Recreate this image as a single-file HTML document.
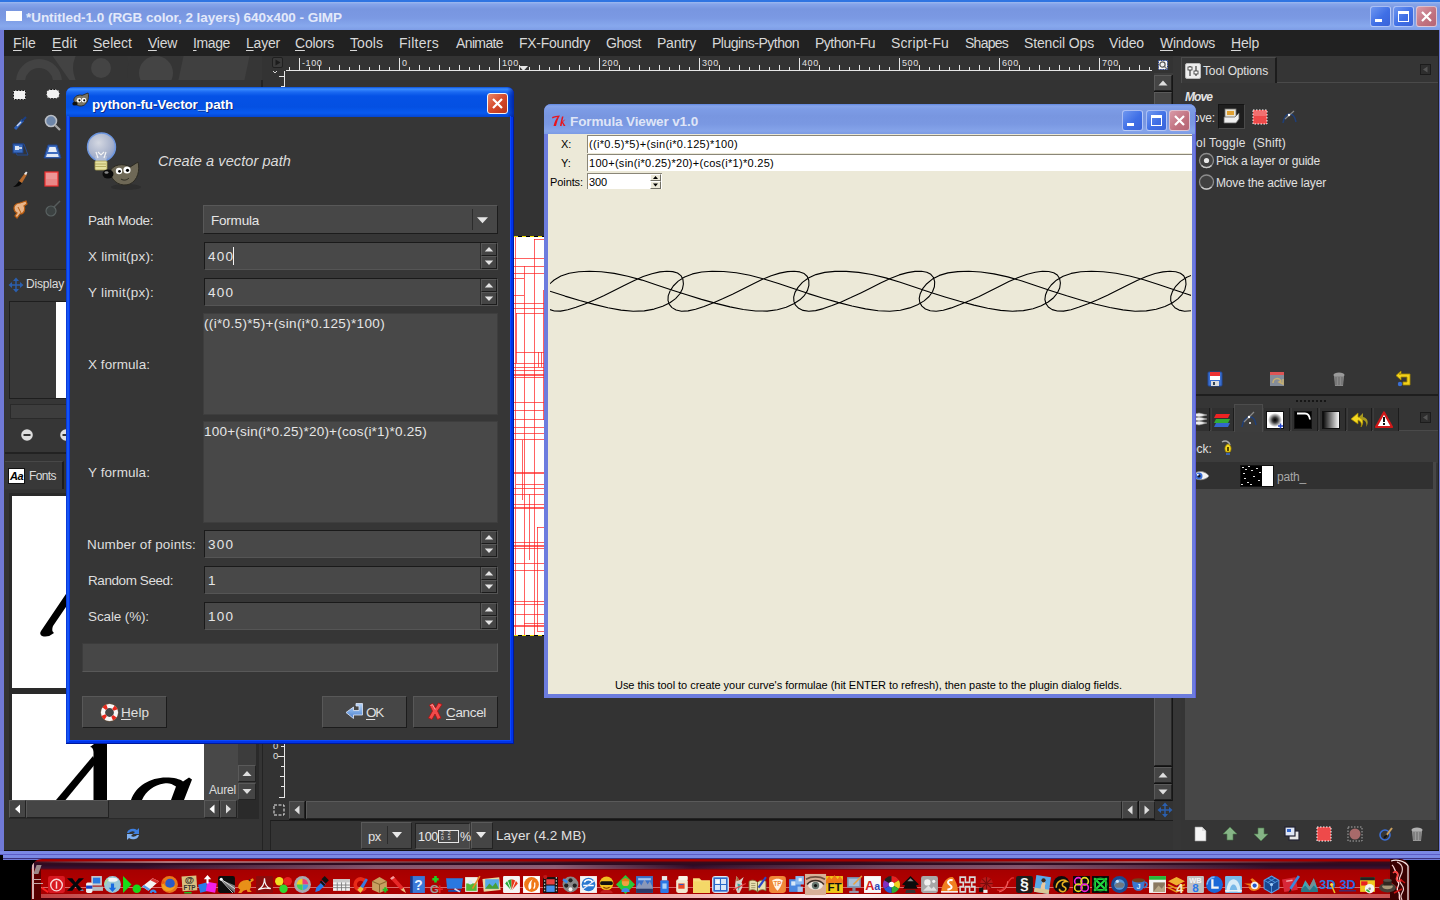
<!DOCTYPE html>
<html><head><meta charset="utf-8"><title>GIMP</title>
<style>
html,body{margin:0;padding:0;}
body{width:1440px;height:900px;overflow:hidden;background:#000;position:relative;font-family:"Liberation Sans",sans-serif;}
div{position:absolute;box-sizing:border-box;}
svg{position:absolute;overflow:visible;}
.t{white-space:nowrap;}
u{text-decoration:underline;text-underline-offset:2px;}
</style></head><body>

<div style="left:0px;top:0px;width:1440px;height:860px;background:#7079d6;"></div>
<div style="left:0px;top:0px;width:1440px;height:30px;background:linear-gradient(#2f74e2 0,#2f74e2 1.500px,#9dbaf0 2px,#86a4ea 4px,#7896e0 9px,#7b99e3 18px,#87a8ed 26px,#7e9de6 30px);"></div>
<div style="left:6px;top:11px;width:16px;height:10px;background:#fff;"></div>
<div class="t" style="left:26px;top:9px;height:17px;line-height:17px;font-size:13.5px;color:#e3e9fa;letter-spacing:-0.042px;font-weight:bold;">*Untitled-1.0 (RGB color, 2 layers) 640x400 - GIMP</div>
<div style="left:1370px;top:6px;width:21px;height:21px;background:linear-gradient(135deg,#6f97f0,#3f6fe6 55%,#3a63d8);border:1px solid rgba(235,240,255,.62);border-radius:3px;"></div>
<div style="left:1375px;top:19px;width:7px;height:3px;background:#fff;"></div>
<div style="left:1393px;top:6px;width:21px;height:21px;background:linear-gradient(135deg,#6f97f0,#3f6fe6 55%,#3a63d8);border:1px solid rgba(235,240,255,.62);border-radius:3px;"></div>
<div style="left:1398px;top:11px;width:11px;height:11px;border:1px solid #fff;border-top:3px solid #fff;"></div>
<div style="left:1416px;top:6px;width:21px;height:21px;background:linear-gradient(135deg,#d99aa8,#c0717f 60%,#b56575);border:1px solid rgba(235,240,255,.62);border-radius:3px;"></div>
<svg style="left:1416px;top:6px" width="21" height="21"><path d="M6 6L15 15M15 6L6 15" stroke="#fff" stroke-width="2.2" fill="none"/></svg>
<div style="left:4px;top:30px;width:1435px;height:26px;background:#212121;"></div>
<div class="t" style="left:13px;top:35px;height:17px;line-height:17px;font-size:14px;color:#d8d8d8;letter-spacing:0.109px;"><u>F</u>ile</div>
<div class="t" style="left:52px;top:35px;height:17px;line-height:17px;font-size:14px;color:#d8d8d8;letter-spacing:0.218px;"><u>E</u>dit</div>
<div class="t" style="left:93px;top:35px;height:17px;line-height:17px;font-size:14px;color:#d8d8d8;letter-spacing:0.014px;"><u>S</u>elect</div>
<div class="t" style="left:148px;top:35px;height:17px;line-height:17px;font-size:14px;color:#d8d8d8;letter-spacing:-0.274px;"><u>V</u>iew</div>
<div class="t" style="left:193px;top:35px;height:17px;line-height:17px;font-size:14px;color:#d8d8d8;letter-spacing:-0.383px;"><u>I</u>mage</div>
<div class="t" style="left:246px;top:35px;height:17px;line-height:17px;font-size:14px;color:#d8d8d8;letter-spacing:-0.205px;"><u>L</u>ayer</div>
<div class="t" style="left:295px;top:35px;height:17px;line-height:17px;font-size:14px;color:#d8d8d8;letter-spacing:-0.243px;"><u>C</u>olors</div>
<div class="t" style="left:350px;top:35px;height:17px;line-height:17px;font-size:14px;color:#d8d8d8;letter-spacing:0.062px;"><u>T</u>ools</div>
<div class="t" style="left:399px;top:35px;height:17px;line-height:17px;font-size:14px;color:#d8d8d8;letter-spacing:0.269px;">Filte<u>r</u>s</div>
<div class="t" style="left:456px;top:35px;height:17px;line-height:17px;font-size:14px;color:#d8d8d8;letter-spacing:-0.623px;">Animate</div>
<div class="t" style="left:519px;top:35px;height:17px;line-height:17px;font-size:14px;color:#d8d8d8;letter-spacing:-0.292px;">FX-Foundry</div>
<div class="t" style="left:606px;top:35px;height:17px;line-height:17px;font-size:14px;color:#d8d8d8;letter-spacing:-0.471px;">Ghost</div>
<div class="t" style="left:657px;top:35px;height:17px;line-height:17px;font-size:14px;color:#d8d8d8;letter-spacing:-0.244px;">Pantry</div>
<div class="t" style="left:712px;top:35px;height:17px;line-height:17px;font-size:14px;color:#d8d8d8;letter-spacing:-0.512px;">Plugins-Python</div>
<div class="t" style="left:815px;top:35px;height:17px;line-height:17px;font-size:14px;color:#d8d8d8;letter-spacing:-0.510px;">Python-Fu</div>
<div class="t" style="left:891px;top:35px;height:17px;line-height:17px;font-size:14px;color:#d8d8d8;letter-spacing:0.134px;">Script-Fu</div>
<div class="t" style="left:965px;top:35px;height:17px;line-height:17px;font-size:14px;color:#d8d8d8;letter-spacing:-0.748px;">Shapes</div>
<div class="t" style="left:1024px;top:35px;height:17px;line-height:17px;font-size:14px;color:#d8d8d8;letter-spacing:-0.145px;">Stencil Ops</div>
<div class="t" style="left:1109px;top:35px;height:17px;line-height:17px;font-size:14px;color:#d8d8d8;letter-spacing:-0.112px;">Video</div>
<div class="t" style="left:1160px;top:35px;height:17px;line-height:17px;font-size:14px;color:#d8d8d8;letter-spacing:-0.257px;"><u>W</u>indows</div>
<div class="t" style="left:1231px;top:35px;height:17px;line-height:17px;font-size:14px;color:#d8d8d8;letter-spacing:-0.199px;"><u>H</u>elp</div>
<div style="left:4px;top:56px;width:1435px;height:794px;background:#333;"></div>
<div style="left:4px;top:56px;width:258px;height:794px;background:#343434;"></div>
<div style="left:261px;top:80px;width:2px;height:770px;background:#232323;"></div>
<div style="left:5px;top:56px;width:257px;height:24px;background:#363636;overflow:hidden;"><div style="left:11px;top:3px;width:46px;height:46px;border-radius:50%;border:9px solid #434343;"></div><div style="left:56px;top:-8px;width:30px;height:40px;background:#434343;transform:skewX(35deg);"></div><div style="left:68px;top:-16px;width:56px;height:56px;border-radius:50%;background:#353535;"></div><div style="left:86px;top:2px;width:20px;height:20px;border-radius:50%;background:#444;"></div><div style="left:122px;top:-12px;width:58px;height:58px;border-radius:50%;background:#353535;"></div><div style="left:134px;top:0px;width:34px;height:34px;border-radius:50%;background:#444;"></div><div style="left:176px;top:0;width:66px;height:24px;background:#404040;transform:skewX(-12deg);"></div></div>
<svg style="left:12px;top:88px" width="16" height="14" viewBox="0 0 16 14"><rect x="1.5" y="2.5" width="12" height="9" fill="#f2f2f2" stroke="#111" stroke-dasharray="1.5 1.5"/></svg>
<svg style="left:44px;top:87px" width="18" height="14" viewBox="0 0 18 14"><rect x="2.5" y="2.5" width="13" height="9" rx="4" fill="#f2f2f2" stroke="#111" stroke-dasharray="1.5 1.5"/></svg>
<svg style="left:12px;top:114px" width="18" height="18" viewBox="0 0 18 18"><path d="M3 15L11 6" stroke="#2c5fb8" stroke-width="3"/><path d="M10 7L14 3" stroke="#1b3f86" stroke-width="2"/><path d="M5 12L9 8" stroke="#cfd8ea" stroke-width="1.5"/></svg>
<svg style="left:43px;top:113px" width="20" height="20" viewBox="0 0 20 20"><circle cx="8" cy="8" r="5.5" fill="#6e86a8" stroke="#b9bdc4" stroke-width="1.6"/><path d="M12 12L17 17" stroke="#a9a9a9" stroke-width="2.2"/></svg>
<svg style="left:11px;top:142px" width="20" height="18" viewBox="0 0 20 18"><path d="M2 2h11l4 11H6z" fill="none" stroke="#234a92" stroke-width="1"/><rect x="2" y="2" width="10" height="9" fill="#3a6cc0" stroke="#1d3f85"/><rect x="4" y="4" width="4" height="4" fill="#dfe7f5"/><path d="M8 6h3" stroke="#fff" stroke-width="1.4"/></svg>
<svg style="left:43px;top:142px" width="20" height="18" viewBox="0 0 20 18"><path d="M5 3h9l4 13H1z" fill="#3d6cc0" stroke="#1f438c"/><path d="M6.5 5h6l1.5 5H5z" fill="#e8eef8"/><path d="M4 12h11l.8 3H3z" fill="#dfe7f5"/></svg>
<svg style="left:11px;top:170px" width="20" height="20" viewBox="0 0 20 20"><path d="M2 17c2-1 4-3 6-6l3 2c-2 3-5 4-9 4z" fill="#0a0a0a"/><path d="M8 11l6-8 2 1.5-5 8.500z" fill="#b86a2c"/><path d="M13 4l2-2.500 1.500 1L15 5z" fill="#e8e8e8"/></svg>
<svg style="left:44px;top:171px" width="16" height="16" viewBox="0 0 16 16"><rect x="1" y="1" width="13" height="14" fill="#e98888" stroke="#f03030" stroke-width="1.2"/><rect x="2" y="2" width="11" height="6" fill="#f0a0a0" opacity=".6"/></svg>
<svg style="left:10px;top:198px" width="22" height="22" viewBox="0 0 22 22"><path d="M4 10c0-3 3-5 6-5l6-2 1 3-3 2c2 3 0 8-4 8l-3 4-2-2 2-3c-2-1-3-3-3-5z" fill="#e8b58a" stroke="#b85c10" stroke-width="1.2"/><path d="M8 9l3 6" stroke="#b85c10" stroke-width="1"/></svg>
<svg style="left:43px;top:198px" width="20" height="22" viewBox="0 0 20 22"><circle cx="8" cy="13" r="5" fill="#3c4242" stroke="#5a6262" stroke-width="1.2"/><path d="M11 9L17 3" stroke="#565c5c" stroke-width="1.5"/></svg>
<div style="left:5px;top:269px;width:257px;height:1px;background:#242424;"></div>
<div style="left:5px;top:270px;width:257px;height:182px;background:#363636;"></div>
<svg style="left:8px;top:277px" width="16" height="16" viewBox="0 0 16 16"><path d="M8 0.500l3 3.500h-6zM8 15.500l3-3.500h-6zM0.500 8l3.500-3v6zM15.500 8l-3.500-3v6z" fill="#2b5fae"/><path d="M8 3v10M3 8h10" stroke="#2b5fae" stroke-width="1.400"/></svg>
<div class="t" style="left:26px;top:276px;height:17px;line-height:17px;font-size:12px;color:#dcdcdc;letter-spacing:-0.192px;">Display</div>
<div style="left:9px;top:301px;width:60px;height:98px;background:#383838;border:1px solid #1e1e1e;"></div>
<div style="left:56px;top:302px;width:12px;height:96px;background:#fff;"></div>
<div style="left:10px;top:404px;width:60px;height:15px;background:#3d3d3d;border:1px solid #2a2a2a;"></div>
<svg style="left:20px;top:428px" width="14" height="14" viewBox="0 0 14 14"><circle cx="7" cy="7" r="5.800" fill="#dedede"/><rect x="3.500" y="6" width="7" height="2" fill="#333"/></svg>
<svg style="left:59px;top:428px" width="14" height="14" viewBox="0 0 14 14"><circle cx="7" cy="7" r="5.800" fill="#dedede"/><rect x="3.500" y="6" width="7" height="2" fill="#333"/></svg>
<div style="left:5px;top:452px;width:257px;height:2px;background:#222;"></div>
<div style="left:5px;top:454px;width:257px;height:396px;background:#343434;"></div>
<div style="left:5px;top:461px;width:59px;height:28px;background:#383838;border-right:2px solid #1c1c1c;border-top:1px solid #484848;"></div>
<div style="left:8px;top:468px;width:17px;height:16px;background:#fff;border:1px solid #111;"><div class="t" style="left:1px;top:0;font:italic bold 11px/14px 'Liberation Sans',sans-serif;color:#000;letter-spacing:-0.5px">Aa</div></div>
<div class="t" style="left:29px;top:468px;height:17px;line-height:17px;font-size:12px;color:#dcdcdc;letter-spacing:-0.602px;">Fonts</div>
<div style="left:9px;top:493px;width:250px;height:326px;background:#2a2a2a;"></div>
<div style="left:12px;top:496px;width:192px;height:192px;background:#fff;"></div>
<div style="left:12px;top:694px;width:192px;height:106px;background:#fff;"></div>
<svg style="left:0;top:0" width="1440" height="900"><path d="M70 588L70 601L53 626Q51 631 54 633Q48 638 42 636Q39 634 41 631Z" fill="#000"/><path d="M94 744L107 744L107 800L93.5 800L93.5 752Q93 747 90 747Z" fill="#000"/><path d="M93 756L96 763L65.500 800L56 800Z" fill="#000"/><path d="M131 800C136 786 150 777.500 166 777.500C174 777.500 180 779 183 781.500L189 777.500L192 779.500L184 800L171 800L176 786.500C172 783.500 168 782.500 164 783.500C154 785 146 791 142 800Z" fill="#000"/></svg>
<div style="left:204px;top:496px;width:34px;height:192px;background:#484848;"></div>
<div style="left:204px;top:694px;width:34px;height:106px;background:#484848;"></div>
<div class="t" style="left:209px;top:782px;height:16px;line-height:16px;font-size:12px;color:#dcdcdc;letter-spacing:-0.203px;">Aurel</div>
<div style="left:238px;top:496px;width:18px;height:304px;background:#3c3c3c;"></div>
<div style="left:238px;top:765px;width:18px;height:17px;background:#454545;border:1px solid #5a5a5a;border-right-color:#222;border-bottom-color:#222;"></div>
<svg style="left:0;top:0" width="1440" height="900"><polygon points="242.5,776.0 251.5,776.0 247.0,771.0" fill="#dedede"/></svg>
<div style="left:238px;top:783px;width:18px;height:17px;background:#454545;border:1px solid #5a5a5a;border-right-color:#222;border-bottom-color:#222;"></div>
<svg style="left:0;top:0" width="1440" height="900"><polygon points="242.5,789.0 251.5,789.0 247.0,794.0" fill="#dedede"/></svg>
<div style="left:9px;top:800px;width:229px;height:18px;background:#3c3c3c;"></div>
<div style="left:9px;top:800px;width:17px;height:18px;background:#454545;border:1px solid #5a5a5a;border-right-color:#222;border-bottom-color:#222;"></div>
<svg style="left:0;top:0" width="1440" height="900"><polygon points="20.0,804.5 20.0,813.5 15.0,809.0" fill="#fff"/></svg>
<div style="left:26px;top:800px;width:83px;height:18px;background:#454545;border:1px solid #585858;border-right-color:#222;border-bottom-color:#222;"></div>
<div style="left:204px;top:800px;width:16px;height:18px;background:#454545;border:1px solid #5a5a5a;border-right-color:#222;border-bottom-color:#222;"></div>
<svg style="left:0;top:0" width="1440" height="900"><polygon points="214.5,804.5 214.5,813.5 209.5,809.0" fill="#fff"/></svg>
<div style="left:220px;top:800px;width:17px;height:18px;background:#454545;border:1px solid #5a5a5a;border-right-color:#222;border-bottom-color:#222;"></div>
<svg style="left:0;top:0" width="1440" height="900"><polygon points="226.0,804.5 226.0,813.5 231.0,809.0" fill="#dedede"/></svg>
<svg style="left:124px;top:825px" width="18" height="18" viewBox="0 0 18 18"><path d="M3 8a6 5 0 0 1 10-3l2-2v6h-6l2-2a4 3 0 0 0-6 1z" fill="#3d7fe0"/><path d="M15 10a6 5 0 0 1-10 3l-2 2v-6h6l-2 2a4 3 0 0 0 6-1z" fill="#7fb0f0"/></svg>
<div style="left:270px;top:56px;width:903px;height:765px;background:#333;"></div>
<div style="left:272px;top:57px;width:11px;height:11px;background:#3b3b3b;border:1px solid #202020;border-radius:2px;"></div>
<svg style="left:272px;top:57px" width="11" height="11" viewBox="0 0 11 11"><polygon points="3.500,2.500 3.500,8.500 8.500,5.500" fill="#1c1c1c"/></svg>
<svg style="left:270px;top:68px" width="12" height="8" viewBox="0 0 12 8"><path d="M3 3l2 2 2-2" fill="none" stroke="#d8d8d8" stroke-width="1"/></svg>
<svg style="left:0;top:0" width="1440" height="900"><rect x="289" y="67" width="1" height="4" fill="#e6e6e6"/><rect x="299" y="58" width="1" height="13" fill="#e6e6e6"/><rect x="309" y="67" width="1" height="4" fill="#e6e6e6"/><rect x="319" y="65" width="1" height="6" fill="#e6e6e6"/><rect x="329" y="67" width="1" height="4" fill="#e6e6e6"/><rect x="339" y="65" width="1" height="6" fill="#e6e6e6"/><rect x="349" y="67" width="1" height="4" fill="#e6e6e6"/><rect x="359" y="65" width="1" height="6" fill="#e6e6e6"/><rect x="369" y="67" width="1" height="4" fill="#e6e6e6"/><rect x="379" y="65" width="1" height="6" fill="#e6e6e6"/><rect x="389" y="67" width="1" height="4" fill="#e6e6e6"/><rect x="399" y="58" width="1" height="13" fill="#e6e6e6"/><rect x="409" y="67" width="1" height="4" fill="#e6e6e6"/><rect x="419" y="65" width="1" height="6" fill="#e6e6e6"/><rect x="429" y="67" width="1" height="4" fill="#e6e6e6"/><rect x="439" y="65" width="1" height="6" fill="#e6e6e6"/><rect x="449" y="67" width="1" height="4" fill="#e6e6e6"/><rect x="459" y="65" width="1" height="6" fill="#e6e6e6"/><rect x="469" y="67" width="1" height="4" fill="#e6e6e6"/><rect x="479" y="65" width="1" height="6" fill="#e6e6e6"/><rect x="489" y="67" width="1" height="4" fill="#e6e6e6"/><rect x="499" y="58" width="1" height="13" fill="#e6e6e6"/><rect x="509" y="67" width="1" height="4" fill="#e6e6e6"/><rect x="519" y="65" width="1" height="6" fill="#e6e6e6"/><rect x="529" y="67" width="1" height="4" fill="#e6e6e6"/><rect x="539" y="65" width="1" height="6" fill="#e6e6e6"/><rect x="549" y="67" width="1" height="4" fill="#e6e6e6"/><rect x="559" y="65" width="1" height="6" fill="#e6e6e6"/><rect x="569" y="67" width="1" height="4" fill="#e6e6e6"/><rect x="579" y="65" width="1" height="6" fill="#e6e6e6"/><rect x="589" y="67" width="1" height="4" fill="#e6e6e6"/><rect x="599" y="58" width="1" height="13" fill="#e6e6e6"/><rect x="609" y="67" width="1" height="4" fill="#e6e6e6"/><rect x="619" y="65" width="1" height="6" fill="#e6e6e6"/><rect x="629" y="67" width="1" height="4" fill="#e6e6e6"/><rect x="639" y="65" width="1" height="6" fill="#e6e6e6"/><rect x="649" y="67" width="1" height="4" fill="#e6e6e6"/><rect x="659" y="65" width="1" height="6" fill="#e6e6e6"/><rect x="669" y="67" width="1" height="4" fill="#e6e6e6"/><rect x="679" y="65" width="1" height="6" fill="#e6e6e6"/><rect x="689" y="67" width="1" height="4" fill="#e6e6e6"/><rect x="699" y="58" width="1" height="13" fill="#e6e6e6"/><rect x="709" y="67" width="1" height="4" fill="#e6e6e6"/><rect x="719" y="65" width="1" height="6" fill="#e6e6e6"/><rect x="729" y="67" width="1" height="4" fill="#e6e6e6"/><rect x="739" y="65" width="1" height="6" fill="#e6e6e6"/><rect x="749" y="67" width="1" height="4" fill="#e6e6e6"/><rect x="759" y="65" width="1" height="6" fill="#e6e6e6"/><rect x="769" y="67" width="1" height="4" fill="#e6e6e6"/><rect x="779" y="65" width="1" height="6" fill="#e6e6e6"/><rect x="789" y="67" width="1" height="4" fill="#e6e6e6"/><rect x="799" y="58" width="1" height="13" fill="#e6e6e6"/><rect x="809" y="67" width="1" height="4" fill="#e6e6e6"/><rect x="819" y="65" width="1" height="6" fill="#e6e6e6"/><rect x="829" y="67" width="1" height="4" fill="#e6e6e6"/><rect x="839" y="65" width="1" height="6" fill="#e6e6e6"/><rect x="849" y="67" width="1" height="4" fill="#e6e6e6"/><rect x="859" y="65" width="1" height="6" fill="#e6e6e6"/><rect x="869" y="67" width="1" height="4" fill="#e6e6e6"/><rect x="879" y="65" width="1" height="6" fill="#e6e6e6"/><rect x="889" y="67" width="1" height="4" fill="#e6e6e6"/><rect x="899" y="58" width="1" height="13" fill="#e6e6e6"/><rect x="909" y="67" width="1" height="4" fill="#e6e6e6"/><rect x="919" y="65" width="1" height="6" fill="#e6e6e6"/><rect x="929" y="67" width="1" height="4" fill="#e6e6e6"/><rect x="939" y="65" width="1" height="6" fill="#e6e6e6"/><rect x="949" y="67" width="1" height="4" fill="#e6e6e6"/><rect x="959" y="65" width="1" height="6" fill="#e6e6e6"/><rect x="969" y="67" width="1" height="4" fill="#e6e6e6"/><rect x="979" y="65" width="1" height="6" fill="#e6e6e6"/><rect x="989" y="67" width="1" height="4" fill="#e6e6e6"/><rect x="999" y="58" width="1" height="13" fill="#e6e6e6"/><rect x="1009" y="67" width="1" height="4" fill="#e6e6e6"/><rect x="1019" y="65" width="1" height="6" fill="#e6e6e6"/><rect x="1029" y="67" width="1" height="4" fill="#e6e6e6"/><rect x="1039" y="65" width="1" height="6" fill="#e6e6e6"/><rect x="1049" y="67" width="1" height="4" fill="#e6e6e6"/><rect x="1059" y="65" width="1" height="6" fill="#e6e6e6"/><rect x="1069" y="67" width="1" height="4" fill="#e6e6e6"/><rect x="1079" y="65" width="1" height="6" fill="#e6e6e6"/><rect x="1089" y="67" width="1" height="4" fill="#e6e6e6"/><rect x="1099" y="58" width="1" height="13" fill="#e6e6e6"/><rect x="1109" y="67" width="1" height="4" fill="#e6e6e6"/><rect x="1119" y="65" width="1" height="6" fill="#e6e6e6"/><rect x="1129" y="67" width="1" height="4" fill="#e6e6e6"/><rect x="1139" y="65" width="1" height="6" fill="#e6e6e6"/><rect x="1149" y="67" width="1" height="4" fill="#e6e6e6"/><rect x="286" y="70" width="866" height="1" fill="#e6e6e6"/><rect x="284" y="71" width="1" height="16" fill="#e6e6e6"/><rect x="279" y="76" width="6" height="1" fill="#e6e6e6"/><rect x="281" y="86" width="4" height="1" fill="#e6e6e6"/><rect x="284" y="744" width="1" height="54" fill="#e6e6e6"/><rect x="281" y="746" width="4" height="1" fill="#e6e6e6"/><rect x="278" y="756" width="7" height="1" fill="#e6e6e6"/><rect x="281" y="766" width="4" height="1" fill="#e6e6e6"/><rect x="280" y="776" width="5" height="1" fill="#e6e6e6"/><rect x="281" y="786" width="4" height="1" fill="#e6e6e6"/><rect x="279" y="797" width="6" height="1" fill="#e6e6e6"/><polygon points="519,66 528,66 523.5,71" fill="#e6e6e6"/></svg>
<div class="t" style="left:302px;top:58px;height:11px;line-height:11px;font-size:9px;color:#e0e0e0;letter-spacing:0.6px;">-100</div>
<div class="t" style="left:402px;top:58px;height:11px;line-height:11px;font-size:9px;color:#e0e0e0;letter-spacing:0.6px;">0</div>
<div class="t" style="left:502px;top:58px;height:11px;line-height:11px;font-size:9px;color:#e0e0e0;letter-spacing:0.6px;">100</div>
<div class="t" style="left:602px;top:58px;height:11px;line-height:11px;font-size:9px;color:#e0e0e0;letter-spacing:0.6px;">200</div>
<div class="t" style="left:702px;top:58px;height:11px;line-height:11px;font-size:9px;color:#e0e0e0;letter-spacing:0.6px;">300</div>
<div class="t" style="left:802px;top:58px;height:11px;line-height:11px;font-size:9px;color:#e0e0e0;letter-spacing:0.6px;">400</div>
<div class="t" style="left:902px;top:58px;height:11px;line-height:11px;font-size:9px;color:#e0e0e0;letter-spacing:0.6px;">500</div>
<div class="t" style="left:1002px;top:58px;height:11px;line-height:11px;font-size:9px;color:#e0e0e0;letter-spacing:0.6px;">600</div>
<div class="t" style="left:1102px;top:58px;height:11px;line-height:11px;font-size:9px;color:#e0e0e0;letter-spacing:0.6px;">700</div>
<div class="t" style="left:273px;top:741px;height:10px;line-height:10px;font-size:9.5px;color:#e0e0e0;">0</div>
<div class="t" style="left:273px;top:751px;height:10px;line-height:10px;font-size:9.5px;color:#e0e0e0;">0</div>
<svg style="left:1158px;top:60px" width="10" height="10" viewBox="0 0 10 10"><rect x="0.500" y="0.500" width="9" height="9" fill="#f8f8f8" stroke="#1a3a9a" stroke-dasharray="1.200 1.200"/><circle cx="4.500" cy="4.500" r="2.600" fill="#f0f0f0" stroke="#555" stroke-width="1.200"/><path d="M6.500 6.500l2.500 2.500" stroke="#777" stroke-width="1.300"/></svg>
<div style="left:1154px;top:73px;width:19px;height:728px;background:#3c3c3c;"></div>
<div style="left:1172px;top:75px;width:1px;height:726px;background:#161616;"></div>
<div style="left:1154px;top:75px;width:18px;height:16px;background:#454545;border:1px solid #5a5a5a;border-right-color:#222;border-bottom-color:#222;"></div>
<svg style="left:0;top:0" width="1440" height="900"><polygon points="1158.5,85.5 1167.5,85.5 1163.0,80.5" fill="#dedede"/></svg>
<div style="left:1154px;top:91px;width:18px;height:1px;background:#111;"></div>
<div style="left:1154px;top:92px;width:18px;height:674px;background:#464646;border:1px solid #5a5a5a;border-right-color:#2a2a2a;border-bottom-color:#1c1c1c;"></div>
<div style="left:1154px;top:766px;width:18px;height:1px;background:#111;"></div>
<div style="left:1154px;top:767px;width:18px;height:16px;background:#454545;border:1px solid #5a5a5a;border-right-color:#222;border-bottom-color:#222;"></div>
<svg style="left:0;top:0" width="1440" height="900"><polygon points="1158.5,777.5 1167.5,777.5 1163.0,772.5" fill="#dedede"/></svg>
<div style="left:1154px;top:783px;width:18px;height:1px;background:#111;"></div>
<div style="left:1154px;top:784px;width:18px;height:16px;background:#454545;border:1px solid #5a5a5a;border-right-color:#222;border-bottom-color:#222;"></div>
<svg style="left:0;top:0" width="1440" height="900"><polygon points="1158.5,789.5 1167.5,789.5 1163.0,794.5" fill="#dedede"/></svg>
<div style="left:1154px;top:800px;width:18px;height:1px;background:#111;"></div>
<div style="left:289px;top:801px;width:866px;height:19px;background:#3c3c3c;"></div>
<div style="left:289px;top:819px;width:866px;height:1px;background:#161616;"></div>
<div style="left:289px;top:801px;width:16px;height:18px;background:#454545;border:1px solid #5a5a5a;border-right-color:#222;border-bottom-color:#222;"></div>
<svg style="left:0;top:0" width="1440" height="900"><polygon points="299.5,805.5 299.5,814.5 294.5,810.0" fill="#dedede"/></svg>
<div style="left:305px;top:801px;width:1px;height:18px;background:#111;"></div>
<div style="left:306px;top:801px;width:816px;height:18px;background:#464646;border:1px solid #5a5a5a;border-right-color:#222;border-bottom-color:#222;"></div>
<div style="left:1122px;top:801px;width:16px;height:18px;background:#454545;border:1px solid #5a5a5a;border-right-color:#222;border-bottom-color:#222;"></div>
<svg style="left:0;top:0" width="1440" height="900"><polygon points="1132.5,805.5 1132.5,814.5 1127.5,810.0" fill="#dedede"/></svg>
<div style="left:1138px;top:801px;width:1px;height:18px;background:#111;"></div>
<div style="left:1139px;top:801px;width:16px;height:18px;background:#454545;border:1px solid #5a5a5a;border-right-color:#222;border-bottom-color:#222;"></div>
<svg style="left:0;top:0" width="1440" height="900"><polygon points="1144.5,805.5 1144.5,814.5 1149.5,810.0" fill="#dedede"/></svg>
<svg style="left:273px;top:804px" width="12" height="12" viewBox="0 0 12 12"><rect x="1" y="1" width="10" height="10" fill="none" stroke="#eee" stroke-width="1" stroke-dasharray="3 1.500"/></svg>
<svg style="left:1157px;top:802px" width="16" height="16" viewBox="0 0 16 16"><path d="M8 0.500l3 3.500h-6zM8 15.500l3-3.500h-6zM0.500 8l3.500-3v6zM15.500 8l-3.500-3v6z" fill="#2b5fae"/><path d="M8 3v10M3 8h10" stroke="#2b5fae" stroke-width="1.400"/></svg>
<div style="left:270px;top:820px;width:903px;height:30px;background:#343434;border-top:1px solid #1c1c1c;border-left:1px solid #222;"></div>
<div style="left:361px;top:822px;width:51px;height:27px;background:#454545;border:1px solid #5a5a5a;border-right-color:#222;border-bottom-color:#222;"></div>
<div class="t" style="left:368px;top:828px;height:17px;line-height:17px;font-size:13px;color:#e0e0e0;letter-spacing:-0.365px;">px</div>
<div style="left:387px;top:826px;width:1px;height:18px;background:#2c2c2c;"></div>
<div style="left:415px;top:823px;width:55px;height:26px;background:#484848;border:1px solid #222;border-right-color:#5a5a5a;border-bottom-color:#5a5a5a;"></div>
<div class="t" style="left:418px;top:829px;height:16px;line-height:16px;font-size:12.5px;color:#e8e8e8;letter-spacing:-0.285px;">100</div>
<div style="left:438px;top:830px;width:21px;height:13px;border:1px solid #e8e8e8;"><div class="t" style="left:2px;top:0;font-size:5px;line-height:5px;color:#e8e8e8;letter-spacing:4px">22<br>05</div></div>
<div class="t" style="left:460px;top:829px;height:16px;line-height:16px;font-size:12.5px;color:#e8e8e8;letter-spacing:-3.115px;">%</div>
<div style="left:471px;top:822px;width:22px;height:27px;background:#454545;border:1px solid #5a5a5a;border-right-color:#222;border-bottom-color:#222;"></div>
<svg style="left:0;top:0" width="1440" height="900"><polygon points="392,832 402,832 397,838" fill="#e8e8e8"/><polygon points="476,832 486,832 481,838" fill="#e8e8e8"/></svg>
<div class="t" style="left:496px;top:827px;height:18px;line-height:18px;font-size:13.5px;color:#e0e0e0;letter-spacing:0.052px;">Layer (4.2 MB)</div>
<svg style="left:0;top:0" width="1440" height="900"><rect x="514" y="236" width="31" height="400" fill="#fff"/><rect x="534" y="239" width="11" height="1" fill="#ff2020" opacity=".7"/><rect x="514" y="258" width="31" height="1" fill="#ff2020" opacity=".7"/><rect x="514" y="266" width="31" height="1" fill="#ff2020" opacity=".7"/><rect x="514" y="273" width="31" height="1" fill="#ff2020" opacity=".7"/><rect x="514" y="278" width="10" height="1" fill="#ff2020" opacity=".7"/><rect x="514" y="295" width="10" height="1" fill="#ff2020" opacity=".7"/><rect x="514" y="303" width="31" height="1" fill="#ff2020" opacity=".7"/><rect x="514" y="308" width="31" height="1" fill="#ff2020" opacity=".7"/><rect x="516" y="313" width="29" height="1" fill="#ff2020" opacity=".7"/><rect x="516" y="352" width="29" height="1" fill="#ff2020" opacity=".7"/><rect x="514" y="363" width="31" height="1" fill="#ff2020" opacity=".7"/><rect x="514" y="367" width="31" height="1" fill="#ff2020" opacity=".7"/><rect x="514" y="370" width="31" height="1" fill="#ff2020" opacity=".7"/><rect x="514" y="374" width="31" height="2" fill="#ff2020" opacity=".7"/><rect x="514" y="377" width="31" height="1" fill="#ff2020" opacity=".7"/><rect x="514" y="402" width="31" height="1" fill="#ff2020" opacity=".7"/><rect x="514" y="410" width="31" height="1" fill="#ff2020" opacity=".7"/><rect x="514" y="419" width="31" height="1" fill="#ff2020" opacity=".7"/><rect x="514" y="427" width="31" height="1" fill="#ff2020" opacity=".7"/><rect x="514" y="433" width="31" height="1" fill="#ff2020" opacity=".7"/><rect x="514" y="439" width="31" height="1" fill="#ff2020" opacity=".7"/><rect x="514" y="472" width="31" height="2" fill="#ff2020" opacity=".7"/><rect x="516" y="484" width="29" height="1" fill="#ff2020" opacity=".7"/><rect x="514" y="488" width="31" height="1" fill="#ff2020" opacity=".7"/><rect x="514" y="494" width="31" height="1" fill="#ff2020" opacity=".7"/><rect x="514" y="504" width="31" height="1" fill="#ff2020" opacity=".7"/><rect x="514" y="507" width="31" height="2" fill="#ff2020" opacity=".7"/><rect x="537" y="527" width="8" height="1" fill="#ff2020" opacity=".7"/><rect x="514" y="542" width="31" height="1" fill="#ff2020" opacity=".7"/><rect x="514" y="545" width="31" height="2" fill="#ff2020" opacity=".7"/><rect x="514" y="548" width="31" height="1" fill="#ff2020" opacity=".7"/><rect x="514" y="563" width="31" height="1" fill="#ff2020" opacity=".7"/><rect x="514" y="570" width="31" height="1" fill="#ff2020" opacity=".7"/><rect x="514" y="601" width="31" height="1" fill="#ff2020" opacity=".7"/><rect x="514" y="604" width="31" height="1" fill="#ff2020" opacity=".7"/><rect x="514" y="614" width="31" height="1" fill="#ff2020" opacity=".7"/><rect x="524" y="623" width="21" height="1" fill="#ff2020" opacity=".7"/><rect x="514" y="625" width="31" height="2" fill="#ff2020" opacity=".7"/><rect x="537" y="631" width="8" height="1" fill="#ff2020" opacity=".7"/><rect x="515" y="236" width="1" height="400" fill="#ff2020" opacity=".7"/><rect x="524" y="266" width="1" height="370" fill="#ff2020" opacity=".7"/><rect x="534" y="239" width="1" height="397" fill="#ff2020" opacity=".7"/><rect x="543" y="290" width="1" height="130" fill="#ff2020" opacity=".7"/><rect x="516" y="313" width="1" height="50" fill="#ff2020" opacity=".7"/><rect x="538" y="352" width="1" height="15" fill="#ff2020" opacity=".7"/><rect x="541" y="352" width="1" height="15" fill="#ff2020" opacity=".7"/><rect x="537" y="527" width="1" height="104" fill="#ff2020" opacity=".7"/><rect x="529" y="494" width="1" height="66" fill="#ff2020" opacity=".7"/><rect x="522" y="440" width="1" height="60" fill="#ff2020" opacity=".7"/><path d="M514 236.500H545M514 635.500H545" stroke="#000" stroke-width="1"/><path d="M514 236.500H545M514 635.500H545" stroke="#f0e000" stroke-width="1" stroke-dasharray="4 4"/></svg>
<div style="left:1173px;top:56px;width:8px;height:794px;background:#363636;"></div>
<div style="left:1181px;top:56px;width:1px;height:794px;background:#3f3f3f;"></div>
<div style="left:1181px;top:56px;width:257px;height:794px;background:#353535;"></div>
<div style="left:1438px;top:56px;width:1px;height:794px;background:#222;"></div>
<div style="left:1181px;top:431px;width:257px;height:32px;background:#3c3c3c;"></div>
<div style="left:1181px;top:82px;width:257px;height:1px;background:#4a4a4a;"></div>
<div style="left:1181px;top:57px;width:96px;height:26px;background:#383838;border:1px solid #4c4c4c;border-bottom:none;border-right:2px solid #1c1c1c;"></div>
<svg style="left:1185px;top:63px" width="16" height="16" viewBox="0 0 16 16"><rect x="0.500" y="0.500" width="15" height="15" rx="1.500" fill="#efefef" stroke="#bbb"/><path d="M5 3v10M11 3v10" stroke="#444" stroke-width="1.200"/><rect x="3" y="4" width="4" height="3" fill="#fff" stroke="#333" stroke-width=".8"/><rect x="9" y="8" width="4" height="3" fill="#fff" stroke="#333" stroke-width=".8"/></svg>
<div class="t" style="left:1203px;top:63px;height:17px;line-height:17px;font-size:12px;color:#e0e0e0;letter-spacing:-0.142px;">Tool Options</div>
<div style="left:1420px;top:64px;width:11px;height:11px;background:#2e2e2e;border:1px solid #1c1c1c;"></div>
<svg style="left:1420px;top:64px" width="11" height="11" viewBox="0 0 11 11"><polygon points="7.500,2.500 7.500,8.500 3,5.500" fill="#555"/></svg>
<div class="t" style="left:1185px;top:89px;height:16px;line-height:16px;font-size:12px;color:#e4e4e4;letter-spacing:-0.918px;font-weight:bold;font-style:italic;">Move</div>
<div class="t" style="left:1183px;top:110px;height:17px;line-height:17px;font-size:12px;color:#e0e0e0;letter-spacing:-0.136px;">Move:</div>
<div style="left:1218px;top:104px;width:27px;height:25px;background:#1e1e1e;border:1px solid #141414;border-right-color:#4a4a4a;border-bottom-color:#4a4a4a;"></div>
<svg style="left:1223px;top:108px" width="18" height="17" viewBox="0 0 18 17"><rect x="2" y="1" width="11" height="9" fill="#e8e4d8" stroke="#777" stroke-width=".8"/><rect x="4" y="3" width="7" height="4" fill="#e0a030"/><path d="M1 9h11l4-4v6l-3 4H1z" fill="#f0f0f0" stroke="#666" stroke-width=".8"/></svg>
<svg style="left:1252px;top:109px" width="16" height="16" viewBox="0 0 16 16"><rect x="1" y="1" width="14" height="14" fill="#ee4a4a" stroke="#fff" stroke-width="1" stroke-dasharray="1.500 1.500"/><rect x="2" y="2" width="12" height="5" fill="#f58a8a" opacity=".6"/></svg>
<svg style="left:1280px;top:108px" width="18" height="18" viewBox="0 0 18 18"><path d="M3 15c1-6 4-9 7-9s5 3 6 8" fill="none" stroke="#1f3f78" stroke-width="1.500"/><path d="M5 11L14 3" stroke="#8a8a8a" stroke-width="1.200"/><circle cx="9" cy="7" r="1.200" fill="#fff"/></svg>
<div class="t" style="left:1183px;top:135px;height:17px;line-height:17px;font-size:12px;color:#e0e0e0;letter-spacing:0.192px;">Tool Toggle  (Shift)</div>
<svg style="left:0;top:0" width="1440" height="900"><circle cx="1206.5" cy="160.5" r="7" fill="#404040" stroke="#8c8c8c" stroke-width="1.300"/><path d="M1201.5 165.5A7 7 0 0 0 1211.5 165.5" fill="none" stroke="#c8c8c8" stroke-width="1.300"/><circle cx="1206.5" cy="160.5" r="2.600" fill="#e8e8e8"/></svg>
<svg style="left:0;top:0" width="1440" height="900"><circle cx="1206.5" cy="182" r="7" fill="#404040" stroke="#8c8c8c" stroke-width="1.300"/><path d="M1201.5 187A7 7 0 0 0 1211.5 187" fill="none" stroke="#c8c8c8" stroke-width="1.300"/></svg>
<div class="t" style="left:1216px;top:153px;height:17px;line-height:17px;font-size:12px;color:#e0e0e0;letter-spacing:-0.225px;">Pick a layer or guide</div>
<div class="t" style="left:1216px;top:175px;height:17px;line-height:17px;font-size:12px;color:#e0e0e0;letter-spacing:-0.161px;">Move the active layer</div>
<svg style="left:1207px;top:371px" width="16" height="16" viewBox="0 0 16 16"><rect x="1" y="1" width="14" height="14" rx="1" fill="#3a6fd0" stroke="#234a9a"/><rect x="3" y="1" width="10" height="4" fill="#e33"/><rect x="3" y="5" width="10" height="4" fill="#fff"/><rect x="4" y="10" width="8" height="5" fill="#dcdcdc"/><rect x="6" y="11" width="2" height="3" fill="#345"/></svg>
<svg style="left:1269px;top:371px" width="16" height="16" viewBox="0 0 16 16"><rect x="1" y="1" width="14" height="14" fill="#9aa4b4" opacity=".8"/><rect x="1" y="1" width="14" height="3" fill="#d55"/><path d="M4 12c0-5 6-6 8-2l-2 1 4 2 0-5" stroke="#c8b070" stroke-width="1.500" fill="none"/></svg>
<svg style="left:1331px;top:371px" width="16" height="16" viewBox="0 0 16 16"><ellipse cx="8" cy="4" rx="5.500" ry="2.500" fill="#9a9a9a"/><path d="M3 5l1 10h8l1-10z" fill="#8a8a8a"/><path d="M5 6v8M8 6v8M11 6v8" stroke="#666" stroke-width="1"/></svg>
<svg style="left:1395px;top:370px" width="18" height="18" viewBox="0 0 18 18"><path d="M4 4h11v11H8v-3h4V7H6v3L1 5.500 6 1v3z" fill="#f2d21c" stroke="#a88a00" stroke-width=".8"/><circle cx="5" cy="14" r="2.200" fill="#3b6fd6"/></svg>
<div style="left:1181px;top:394px;width:257px;height:2px;background:#1e1e1e;"></div>
<div style="left:1296px;top:400px;width:2px;height:2px;background:#161616;"></div>
<div style="left:1300px;top:400px;width:2px;height:2px;background:#161616;"></div>
<div style="left:1304px;top:400px;width:2px;height:2px;background:#161616;"></div>
<div style="left:1308px;top:400px;width:2px;height:2px;background:#161616;"></div>
<div style="left:1312px;top:400px;width:2px;height:2px;background:#161616;"></div>
<div style="left:1316px;top:400px;width:2px;height:2px;background:#161616;"></div>
<div style="left:1320px;top:400px;width:2px;height:2px;background:#161616;"></div>
<div style="left:1324px;top:400px;width:2px;height:2px;background:#161616;"></div>
<div style="left:1181px;top:430px;width:257px;height:1px;background:#4a4a4a;"></div>
<div style="left:1183px;top:408px;width:27px;height:23px;background:#303030;border-right:1px solid #1c1c1c;border-left:1px solid #3c3c3c;"></div>
<div style="left:1211px;top:408px;width:23px;height:23px;background:#303030;border-right:1px solid #1c1c1c;border-left:1px solid #3c3c3c;"></div>
<div style="left:1234px;top:404px;width:29px;height:28px;background:#3d3d3d;border:1px solid #4c4c4c;border-bottom:none;"></div>
<div style="left:1263px;top:408px;width:27px;height:23px;background:#303030;border-right:1px solid #1c1c1c;border-left:1px solid #3c3c3c;"></div>
<div style="left:1291px;top:408px;width:27px;height:23px;background:#303030;border-right:1px solid #1c1c1c;border-left:1px solid #3c3c3c;"></div>
<div style="left:1319px;top:408px;width:27px;height:23px;background:#303030;border-right:1px solid #1c1c1c;border-left:1px solid #3c3c3c;"></div>
<div style="left:1347px;top:408px;width:25px;height:23px;background:#303030;border-right:1px solid #1c1c1c;border-left:1px solid #3c3c3c;"></div>
<div style="left:1373px;top:408px;width:26px;height:23px;background:#303030;border-right:1px solid #1c1c1c;border-left:1px solid #3c3c3c;"></div>
<svg style="left:1190px;top:411px" width="18" height="18" viewBox="0 0 18 18"><path d="M1 4l8-2 8 2-8 2z M1 8l8-2 8 2-8 2z M1 12l8-2 8 2-8 2z" fill="#eee" stroke="#999" stroke-width=".6"/></svg>
<svg style="left:1213px;top:411px" width="18" height="18" viewBox="0 0 18 18"><path d="M3 3h14l-2 4H1z" fill="#e22"/><path d="M2 8h14l-2 4H0z" fill="#3a3" transform="translate(1 0)"/><path d="M2 12h14l-2 4H0z" fill="#36c" transform="translate(1 0)"/></svg>
<svg style="left:1239px;top:409px" width="20" height="20" viewBox="0 0 20 20"><path d="M3 18c1-7 4-10 8-10s5 3 6 8" fill="none" stroke="#1f3f78" stroke-width="1.500"/><path d="M5 13L15 3" stroke="#8a8a8a" stroke-width="1.200"/><circle cx="10" cy="8" r="1.200" fill="#fff"/><circle cx="11" cy="14" r="1" fill="#fff"/></svg>
<svg style="left:1266px;top:411px" width="18" height="18"><defs><radialGradient id="rg1"><stop offset="0" stop-color="#000"/><stop offset=".35" stop-color="#333"/><stop offset="1" stop-color="#fff"/></radialGradient></defs><rect x="0.500" y="0.500" width="17" height="17" fill="#fff" stroke="#111"/><circle cx="9" cy="9" r="7" fill="url(#rg1)"/><path d="M12 15h5M14.500 12.500v5" stroke="#24c" stroke-width="1.500"/></svg>
<svg style="left:1294px;top:411px" width="18" height="18" viewBox="0 0 18 18"><rect x="0.500" y="0.500" width="17" height="17" fill="#000" stroke="#111"/><path d="M3 2.500h8c3.500 0 4.500 2 5 6" fill="none" stroke="#fff" stroke-width="1.800"/></svg>
<svg style="left:1322px;top:411px" width="18" height="18"><defs><linearGradient id="lg1"><stop offset="0" stop-color="#000"/><stop offset="1" stop-color="#fff"/></linearGradient></defs><rect x="0.500" y="0.500" width="17" height="17" fill="url(#lg1)" stroke="#111"/></svg>
<svg style="left:1349px;top:410px" width="20" height="20" viewBox="0 0 20 20"><path d="M14 17c3-4 2-9-3-10v-4l-6 6 6 5v-4c3 1 4 4 3 7z" fill="#a89a20" transform="translate(3 0)"/><path d="M12 17c3-4 2-9-3-10v-4l-7 6 7 5v-4c3 1 4 4 3 7z" fill="#f4d820" stroke="#a88a00" stroke-width=".7"/></svg>
<svg style="left:1375px;top:411px" width="18" height="18" viewBox="0 0 18 18"><path d="M9 1.500L17 16H1z" fill="#fff" stroke="#d01818" stroke-width="2.200" stroke-linejoin="round"/><rect x="8" y="6" width="2" height="5" fill="#111"/><rect x="8" y="12" width="2" height="2" fill="#111"/></svg>
<div style="left:1420px;top:412px;width:11px;height:11px;background:#2e2e2e;border:1px solid #1c1c1c;"></div>
<svg style="left:1420px;top:412px" width="11" height="11" viewBox="0 0 11 11"><polygon points="7.500,2.500 7.500,8.500 3,5.500" fill="#555"/></svg>
<div class="t" style="left:1183px;top:441px;height:17px;line-height:17px;font-size:12px;color:#e0e0e0;letter-spacing:0.064px;">Lock:</div>
<svg style="left:1220px;top:440px" width="16" height="18" viewBox="0 0 16 18"><path d="M2 2c3-2 7-1 8 3" stroke="#aaa" stroke-width="1.500" fill="none"/><path d="M8 4c3 1 4 5 2 8h-4c-2-3-1-7 2-8z" fill="#f4d820" stroke="#a88a00" stroke-width=".8"/><rect x="7" y="7" width="2" height="4" fill="#5a4a00"/><path d="M6 14h4" stroke="#3b6fd6" stroke-width="1.500"/></svg>
<div style="left:1185px;top:462px;width:251px;height:358px;background:#474747;"></div>
<div style="left:1185px;top:462px;width:248px;height:27px;background:#313131;"></div>
<svg style="left:1191px;top:469px" width="20" height="14" viewBox="0 0 20 14"><path d="M1 7c4-6 13-6 17 0-4 5-13 5-17 0z" fill="#f4f4f4" stroke="#888" stroke-width=".8"/><circle cx="8" cy="7" r="3.500" fill="#3b6fd6"/><circle cx="8" cy="7" r="1.600" fill="#112"/><circle cx="6.800" cy="5.800" r="1" fill="#fff"/></svg>
<div style="left:1240px;top:465px;width:34px;height:22px;background:#000;border:1px solid #111;"></div>
<div style="left:1262px;top:466px;width:11px;height:20px;background:#fff;"></div>
<div style="left:1242px;top:467px;width:2px;height:1px;background:#ddd;"></div>
<div style="left:1245px;top:469px;width:2px;height:1px;background:#ddd;"></div>
<div style="left:1243px;top:473px;width:2px;height:1px;background:#ddd;"></div>
<div style="left:1248px;top:466px;width:2px;height:1px;background:#ddd;"></div>
<div style="left:1251px;top:470px;width:2px;height:1px;background:#ddd;"></div>
<div style="left:1244px;top:478px;width:2px;height:1px;background:#ddd;"></div>
<div style="left:1247px;top:482px;width:2px;height:1px;background:#ddd;"></div>
<div style="left:1253px;top:476px;width:2px;height:1px;background:#ddd;"></div>
<div style="left:1256px;top:468px;width:2px;height:1px;background:#ddd;"></div>
<div style="left:1258px;top:480px;width:2px;height:1px;background:#ddd;"></div>
<div style="left:1241px;top:484px;width:2px;height:1px;background:#ddd;"></div>
<div style="left:1250px;top:484px;width:2px;height:1px;background:#ddd;"></div>
<div style="left:1259px;top:472px;width:2px;height:1px;background:#ddd;"></div>
<div class="t" style="left:1277px;top:469px;height:16px;line-height:16px;font-size:12px;color:#a8a8a8;letter-spacing:-0.206px;">path_</div>
<svg style="left:1192px;top:826px" width="16" height="16" viewBox="0 0 16 16"><path d="M3 1h7l4 4v10H3z" fill="#f6f6f6" stroke="#999" stroke-width=".6"/><path d="M10 1v4h4" fill="#ddd"/></svg>
<svg style="left:1222px;top:826px" width="16" height="16" viewBox="0 0 16 16"><path d="M8 1l7 7h-4v6H5V8H1z" fill="#86b486" stroke="#4a7a4a" stroke-width=".6"/></svg>
<svg style="left:1253px;top:826px" width="16" height="16" viewBox="0 0 16 16"><path d="M8 15l7-7h-4V2H5v6H1z" fill="#86b486" stroke="#4a7a4a" stroke-width=".6"/></svg>
<svg style="left:1284px;top:826px" width="16" height="16" viewBox="0 0 16 16"><rect x="5" y="5" width="10" height="9" fill="#e8e8e8" stroke="#223" stroke-width="1.200"/><rect x="1" y="1" width="10" height="9" fill="#dfe6f5" stroke="#223" stroke-width="1.200"/><rect x="3" y="3" width="4" height="3" fill="#36c"/></svg>
<svg style="left:1316px;top:826px" width="16" height="16" viewBox="0 0 16 16"><rect x="1" y="1" width="14" height="14" fill="#ee4a4a" stroke="#fff" stroke-width="1" stroke-dasharray="1.500 1.500"/></svg>
<svg style="left:1347px;top:826px" width="16" height="16" viewBox="0 0 16 16"><rect x="1" y="1" width="14" height="14" fill="none" stroke="#aaa" stroke-width="1" stroke-dasharray="1.500 1.500"/><circle cx="8" cy="8" r="5.500" fill="#a86a6a"/></svg>
<svg style="left:1378px;top:826px" width="16" height="16" viewBox="0 0 16 16"><circle cx="7" cy="9" r="5" fill="none" stroke="#3b6fd6" stroke-width="1.600"/><path d="M8 10L14 2" stroke="#c8a060" stroke-width="2"/><path d="M6 12l3-3" stroke="#111" stroke-width="2"/></svg>
<svg style="left:1409px;top:826px" width="16" height="16" viewBox="0 0 16 16"><ellipse cx="8" cy="4" rx="5.500" ry="2.500" fill="#b0b0b0"/><path d="M3 5l1 10h8l1-10z" fill="#9a9a9a"/><path d="M5 6v8M8 6v8M11 6v8" stroke="#666" stroke-width="1"/></svg>
<div style="left:66px;top:87px;width:448px;height:657px;background:#0034e8;border-radius:7px 7px 0 0;box-shadow:inset -1px -1px 0 #001a9c, inset 1px 0 0 #0a3ad8;"></div>
<div style="left:66px;top:87px;width:448px;height:30px;border-radius:7px 7px 0 0;background:linear-gradient(90deg,rgba(0,20,140,.0) 0,rgba(0,20,140,0) 98.500%,rgba(0,20,140,.7) 100%),linear-gradient(#0a4fd8 0,#3a8cff 2px,#1b6af2 5px,#0552e6 9px,#0450e2 20px,#085af0 26px,#0444d0 30px);"></div>
<div style="left:70px;top:117px;width:440px;height:623px;background:#363636;"></div>
<div style="left:67px;top:116px;width:2px;height:626px;background:#1454f4;"></div>
<div style="left:510px;top:116px;width:1px;height:625px;background:#0c48ff;"></div>
<div style="left:69px;top:740px;width:442px;height:1px;background:#0c48ff;"></div>
<svg style="left:71px;top:93px" width="21" height="19" viewBox="0 0 17 16"><path d="M2 6c0-3 4-5 7-4l5-2c1 3 0 8-3 10-3 2-8 1-9-4z" fill="#7c7664" stroke="#2e2c24" stroke-width=".8"/><circle cx="6.500" cy="6" r="2" fill="#fff"/><circle cx="10.500" cy="6" r="2" fill="#fff"/><circle cx="6.800" cy="6.200" r=".9" fill="#000"/><circle cx="10.800" cy="6.200" r=".9" fill="#000"/><ellipse cx="3" cy="9" rx="2.200" ry="1.600" fill="#111"/></svg>
<div class="t" style="left:92px;top:96px;height:17px;line-height:17px;font-size:13.5px;color:#fff;letter-spacing:-0.143px;font-weight:bold;text-shadow:1px 1px 0 #0a2a8a;">python-fu-Vector_path</div>
<div style="left:487px;top:93px;width:21px;height:21px;background:linear-gradient(135deg,#e9866a,#d5492a 50%,#b8341a);border:1px solid #f4f4f4;border-radius:3px;"></div>
<svg style="left:487px;top:93px" width="21" height="21"><path d="M6 6L15 15M15 6L6 15" stroke="#fff" stroke-width="2.2" fill="none"/></svg>
<svg style="left:84px;top:130px" width="64" height="64" viewBox="0 0 64 64">
<defs><radialGradient id="bulb" cx=".4" cy=".35" r=".7"><stop offset="0" stop-color="#d4d8e2"/><stop offset=".65" stop-color="#aab4cc"/><stop offset="1" stop-color="#8098cc"/></radialGradient></defs>
<ellipse cx="42" cy="57" rx="15" ry="3" fill="#2e2e2e"/>
<circle cx="17.500" cy="17" r="14" fill="url(#bulb)" stroke="#6c96e0" stroke-width="1.400"/>
<path d="M11 26h12l-1 6H12z" fill="#b9c3d8" opacity=".8"/>
<path d="M12 22l2 6M22 22l-2 6M14 22l3 3 3-3" stroke="#f4f4f4" stroke-width="1.200" fill="none"/>
<rect x="11" y="31" width="12" height="9" rx="1" fill="#e4e0a0" stroke="#a8a050" stroke-width=".8"/>
<path d="M11 34h11M11 36.500h11" stroke="#a8a050" stroke-width=".8"/>
<path d="M26 42c2-8 14-9 20-5l8-5c2 8 0 18-8 22-8 3-18-1-20-12z" fill="#6e6856" stroke="#2c2a22" stroke-width="1"/>
<circle cx="35" cy="41" r="3.200" fill="#fff"/><circle cx="43" cy="40" r="3.600" fill="#fff"/>
<circle cx="35.500" cy="41.300" r="1.400" fill="#000"/><circle cx="43.500" cy="40.300" r="1.600" fill="#000"/>
<path d="M37 49c3 2 6 1 8-1" stroke="#2a2820" stroke-width="1" fill="none"/>
<ellipse cx="24" cy="44" rx="5.500" ry="4.500" fill="#0c0c0c"/><ellipse cx="22.500" cy="42.500" rx="2" ry="1.300" fill="#888"/>
</svg>
<div class="t" style="left:158px;top:152px;height:19px;line-height:19px;font-size:14.5px;color:#dcdcdc;letter-spacing:0.081px;font-style:italic;">Create a vector path</div>
<div class="t" style="left:88px;top:212px;height:18px;line-height:18px;font-size:13.5px;color:#dedede;letter-spacing:-0.404px;">Path Mode:</div>
<div style="left:203px;top:205px;width:295px;height:29px;background:#474747;border:1px solid #585858;border-right-color:#1c1c1c;border-bottom-color:#1c1c1c;"></div>
<div class="t" style="left:211px;top:212px;height:18px;line-height:18px;font-size:13.5px;color:#e6e6e6;letter-spacing:-0.216px;">Formula</div>
<div style="left:472px;top:209px;width:1px;height:21px;background:#2c2c2c;"></div>
<svg style="left:0;top:0" width="1440" height="900"><polygon points="477.0,217.25 488.0,217.25 482.5,223.25" fill="#e4e4e4"/></svg>
<div class="t" style="left:88px;top:248px;height:18px;line-height:18px;font-size:13.5px;color:#dedede;letter-spacing:0.188px;">X limit(px):</div>
<div style="left:204px;top:242px;width:294px;height:28px;background:#484848;border:1px solid #1a1a1a;border-right-color:#555;border-bottom-color:#555;"></div>
<div class="t" style="left:208px;top:248px;height:18px;line-height:18px;font-size:13.5px;color:#e6e6e6;letter-spacing:1.200px;">400</div>
<div style="left:480px;top:243px;width:17px;height:26px;background:#444;border-left:1px solid #2a2a2a;"></div>
<div style="left:481px;top:243px;width:16px;height:13px;background:#454545;border:1px solid #585858;border-right-color:#1c1c1c;border-bottom-color:#1c1c1c;"></div>
<div style="left:481px;top:256px;width:16px;height:13px;background:#454545;border:1px solid #585858;border-right-color:#1c1c1c;border-bottom-color:#1c1c1c;"></div>
<svg style="left:0;top:0" width="1440" height="900"><polygon points="484.8,251.6 493.2,251.6 489,246.9" fill="#e4e4e4"/></svg>
<svg style="left:0;top:0" width="1440" height="900"><polygon points="484.8,260.4 493.2,260.4 489,265.1" fill="#e4e4e4"/></svg>
<div style="left:233px;top:247px;width:1px;height:18px;background:#f4f4f4;"></div>
<div class="t" style="left:88px;top:284px;height:18px;line-height:18px;font-size:13.5px;color:#dedede;letter-spacing:0.208px;">Y limit(px):</div>
<div style="left:204px;top:278px;width:294px;height:28px;background:#484848;border:1px solid #1a1a1a;border-right-color:#555;border-bottom-color:#555;"></div>
<div class="t" style="left:208px;top:284px;height:18px;line-height:18px;font-size:13.5px;color:#e6e6e6;letter-spacing:1.200px;">400</div>
<div style="left:480px;top:279px;width:17px;height:26px;background:#444;border-left:1px solid #2a2a2a;"></div>
<div style="left:481px;top:279px;width:16px;height:13px;background:#454545;border:1px solid #585858;border-right-color:#1c1c1c;border-bottom-color:#1c1c1c;"></div>
<div style="left:481px;top:292px;width:16px;height:13px;background:#454545;border:1px solid #585858;border-right-color:#1c1c1c;border-bottom-color:#1c1c1c;"></div>
<svg style="left:0;top:0" width="1440" height="900"><polygon points="484.8,287.6 493.2,287.6 489,282.9" fill="#e4e4e4"/></svg>
<svg style="left:0;top:0" width="1440" height="900"><polygon points="484.8,296.4 493.2,296.4 489,301.1" fill="#e4e4e4"/></svg>
<div class="t" style="left:88px;top:356px;height:18px;line-height:18px;font-size:13.5px;color:#dedede;letter-spacing:0.048px;">X formula:</div>
<div style="left:203px;top:313px;width:295px;height:102px;background:#484848;border:1px solid #3e3e3e;"></div>
<div class="t" style="left:204px;top:315px;height:18px;line-height:18px;font-size:13.5px;color:#e6e6e6;letter-spacing:0.343px;">((i*0.5)*5)+(sin(i*0.125)*100)</div>
<div class="t" style="left:88px;top:464px;height:18px;line-height:18px;font-size:13.5px;color:#dedede;letter-spacing:0.072px;">Y formula:</div>
<div style="left:203px;top:421px;width:295px;height:102px;background:#484848;border:1px solid #3e3e3e;"></div>
<div class="t" style="left:204px;top:423px;height:18px;line-height:18px;font-size:13.5px;color:#e6e6e6;letter-spacing:0.233px;">100+(sin(i*0.25)*20)+(cos(i*1)*0.25)</div>
<div class="t" style="left:87px;top:536px;height:18px;line-height:18px;font-size:13.5px;color:#dedede;letter-spacing:0.144px;">Number of points:</div>
<div style="left:204px;top:530px;width:294px;height:28px;background:#484848;border:1px solid #1a1a1a;border-right-color:#555;border-bottom-color:#555;"></div>
<div class="t" style="left:208px;top:536px;height:18px;line-height:18px;font-size:13.5px;color:#e6e6e6;letter-spacing:1.200px;">300</div>
<div style="left:480px;top:531px;width:17px;height:26px;background:#444;border-left:1px solid #2a2a2a;"></div>
<div style="left:481px;top:531px;width:16px;height:13px;background:#454545;border:1px solid #585858;border-right-color:#1c1c1c;border-bottom-color:#1c1c1c;"></div>
<div style="left:481px;top:544px;width:16px;height:13px;background:#454545;border:1px solid #585858;border-right-color:#1c1c1c;border-bottom-color:#1c1c1c;"></div>
<svg style="left:0;top:0" width="1440" height="900"><polygon points="484.8,539.6 493.2,539.6 489,534.9" fill="#e4e4e4"/></svg>
<svg style="left:0;top:0" width="1440" height="900"><polygon points="484.8,548.4 493.2,548.4 489,553.1" fill="#e4e4e4"/></svg>
<div class="t" style="left:88px;top:572px;height:18px;line-height:18px;font-size:13.5px;color:#dedede;letter-spacing:-0.421px;">Random Seed:</div>
<div style="left:204px;top:566px;width:294px;height:28px;background:#484848;border:1px solid #1a1a1a;border-right-color:#555;border-bottom-color:#555;"></div>
<div class="t" style="left:208px;top:572px;height:18px;line-height:18px;font-size:13.5px;color:#e6e6e6;letter-spacing:1.200px;">1</div>
<div style="left:480px;top:567px;width:17px;height:26px;background:#444;border-left:1px solid #2a2a2a;"></div>
<div style="left:481px;top:567px;width:16px;height:13px;background:#454545;border:1px solid #585858;border-right-color:#1c1c1c;border-bottom-color:#1c1c1c;"></div>
<div style="left:481px;top:580px;width:16px;height:13px;background:#454545;border:1px solid #585858;border-right-color:#1c1c1c;border-bottom-color:#1c1c1c;"></div>
<svg style="left:0;top:0" width="1440" height="900"><polygon points="484.8,575.6 493.2,575.6 489,570.9" fill="#e4e4e4"/></svg>
<svg style="left:0;top:0" width="1440" height="900"><polygon points="484.8,584.4 493.2,584.4 489,589.1" fill="#e4e4e4"/></svg>
<div class="t" style="left:88px;top:608px;height:18px;line-height:18px;font-size:13.5px;color:#dedede;letter-spacing:-0.127px;">Scale (%):</div>
<div style="left:204px;top:602px;width:294px;height:28px;background:#484848;border:1px solid #1a1a1a;border-right-color:#555;border-bottom-color:#555;"></div>
<div class="t" style="left:208px;top:608px;height:18px;line-height:18px;font-size:13.5px;color:#e6e6e6;letter-spacing:1.200px;">100</div>
<div style="left:480px;top:603px;width:17px;height:26px;background:#444;border-left:1px solid #2a2a2a;"></div>
<div style="left:481px;top:603px;width:16px;height:13px;background:#454545;border:1px solid #585858;border-right-color:#1c1c1c;border-bottom-color:#1c1c1c;"></div>
<div style="left:481px;top:616px;width:16px;height:13px;background:#454545;border:1px solid #585858;border-right-color:#1c1c1c;border-bottom-color:#1c1c1c;"></div>
<svg style="left:0;top:0" width="1440" height="900"><polygon points="484.8,611.6 493.2,611.6 489,606.9" fill="#e4e4e4"/></svg>
<svg style="left:0;top:0" width="1440" height="900"><polygon points="484.8,620.4 493.2,620.4 489,625.1" fill="#e4e4e4"/></svg>
<div style="left:82px;top:643px;width:416px;height:29px;background:#474747;border:1px solid #3c3c3c;border-right-color:#585858;border-bottom-color:#585858;"></div>
<div style="left:82px;top:696px;width:85px;height:32px;background:#464646;border:1px solid #585858;border-right-color:#1c1c1c;border-bottom-color:#1c1c1c;"></div>
<div style="left:322px;top:696px;width:85px;height:32px;background:#464646;border:1px solid #585858;border-right-color:#1c1c1c;border-bottom-color:#1c1c1c;"></div>
<div style="left:413px;top:696px;width:85px;height:32px;background:#464646;border:1px solid #585858;border-right-color:#1c1c1c;border-bottom-color:#1c1c1c;"></div>
<svg style="left:100px;top:703px" width="19" height="19" viewBox="0 0 19 19"><circle cx="9.500" cy="9.500" r="6.600" fill="none" stroke="#f6f6f6" stroke-width="4.400"/><circle cx="9.500" cy="9.500" r="6.600" fill="none" stroke="#e8281c" stroke-width="4.400" stroke-dasharray="3.600 6.767" transform="rotate(35 9.500 9.500)"/><circle cx="9.500" cy="9.500" r="9" fill="none" stroke="#6a4a2a" stroke-width=".5"/></svg>
<div class="t" style="left:121px;top:704px;height:18px;line-height:18px;font-size:13.5px;color:#e0e0e0;letter-spacing:0.059px;"><u>H</u>elp</div>
<svg style="left:345px;top:702px" width="19" height="18" viewBox="0 0 19 18"><defs><linearGradient id="okg" x1="0" y1="0" x2="0" y2="1"><stop offset="0" stop-color="#b8d4f6"/><stop offset=".55" stop-color="#7aa8e4"/><stop offset="1" stop-color="#4a7ac8"/></linearGradient></defs><path d="M1 10.500L8.500 5v3.500h5.500V4h-3V1.500h6.500V13H8.500v3.500z" fill="url(#okg)" stroke="#dfe9fa" stroke-width=".8"/></svg>
<div class="t" style="left:366px;top:704px;height:18px;line-height:18px;font-size:13.5px;color:#e0e0e0;letter-spacing:-1.252px;"><u>O</u>K</div>
<svg style="left:427px;top:702px" width="16" height="18" viewBox="0 0 16 18"><path d="M2.500 3l3.500-1.500 2.500 4.500L11.500 1l3.500 1.500-4.500 6.500 3.500 7-3.500 1.500L8 12l-3 5.500-3.500-1.500L5.500 9z" fill="#f04a4a" stroke="#b01010" stroke-width=".8"/><path d="M3.500 3.500l2-.8 2.800 5" stroke="#f8a0a0" stroke-width="1" fill="none"/></svg>
<div class="t" style="left:446px;top:704px;height:18px;line-height:18px;font-size:13.5px;color:#e0e0e0;letter-spacing:-0.337px;"><u>C</u>ancel</div>
<div style="left:544px;top:104px;width:652px;height:594px;background:#6c7cde;border-radius:7px 7px 0 0;"></div>
<div style="left:544px;top:104px;width:652px;height:30px;border-radius:7px 7px 0 0;background:linear-gradient(#5f86e0 0,#86a4ea 2px,#7d9ce6 5px,#7896e0 12px,#7a98e2 20px,#85a4ea 27px,#7c9be4 30px);"></div>
<div style="left:1195px;top:112px;width:1px;height:586px;background:#5c5cd6;"></div>
<div style="left:548px;top:134px;width:644px;height:560px;background:#ece9d8;"></div>
<svg style="left:551px;top:115px" width="16" height="12" viewBox="0 0 16 12"><path d="M1 2c2-1 5-1 8-1.500-2 3-3 6-4 10.500h-2.500c1-4 2-6.500 4-9-2 .3-3.500.7-5 1.500z" fill="#e8141c"/><path d="M9 11c.5-3 1-6 2-9.500h1.500c-.5 2-1 4-1.300 5.500 1-1.500 2-2.500 3.300-2.500-1 1-2 1.800-2.500 2.500.8 1.200 1.600 2.500 2.500 4h-1.800c-.5-1-1-2-1.600-3-.2 1-.4 2-.5 3z" fill="#e8141c"/></svg>
<div class="t" style="left:570px;top:113px;height:17px;line-height:17px;font-size:13.5px;color:#dfe5f7;letter-spacing:-0.121px;font-weight:bold;">Formula Viewer v1.0</div>
<div style="left:1122px;top:110px;width:21px;height:21px;background:linear-gradient(135deg,#6f97f0,#3f6fe6 55%,#3a63d8);border:1px solid rgba(235,240,255,.62);border-radius:3px;"></div>
<div style="left:1127px;top:123px;width:7px;height:3px;background:#fff;"></div>
<div style="left:1146px;top:110px;width:21px;height:21px;background:linear-gradient(135deg,#6f97f0,#3f6fe6 55%,#3a63d8);border:1px solid rgba(235,240,255,.62);border-radius:3px;"></div>
<div style="left:1151px;top:115px;width:11px;height:11px;border:1px solid #fff;border-top:3px solid #fff;"></div>
<div style="left:1169px;top:110px;width:21px;height:21px;background:linear-gradient(135deg,#d99aa8,#c0717f 60%,#b56575);border:1px solid rgba(235,240,255,.62);border-radius:3px;"></div>
<svg style="left:1169px;top:110px" width="21" height="21"><path d="M6 6L15 15M15 6L6 15" stroke="#fff" stroke-width="2.2" fill="none"/></svg>
<div class="t" style="left:561px;top:137px;height:14px;line-height:14px;font-size:11px;color:#000;">X:</div>
<div class="t" style="left:561px;top:156px;height:14px;line-height:14px;font-size:11px;color:#000;">Y:</div>
<div style="left:587px;top:135px;width:605px;height:18px;background:#fff;border-top:1px solid #8a8678;border-left:1px solid #8a8678;"></div>
<div style="left:587px;top:154px;width:605px;height:17px;background:#fff;border-top:1px solid #8a8678;border-left:1px solid #8a8678;"></div>
<div class="t" style="left:589px;top:137px;height:14px;line-height:14px;font-size:11px;color:#000;letter-spacing:0.330px;">((i*0.5)*5)+(sin(i*0.125)*100)</div>
<div class="t" style="left:589px;top:156px;height:14px;line-height:14px;font-size:11px;color:#000;letter-spacing:0.281px;">100+(sin(i*0.25)*20)+(cos(i*1)*0.25)</div>
<div class="t" style="left:550px;top:175px;height:14px;line-height:14px;font-size:11px;color:#000;letter-spacing:-0.090px;">Points:</div>
<div style="left:587px;top:173px;width:75px;height:16px;background:#fff;border-top:1px solid #8a8678;border-left:1px solid #8a8678;"></div>
<div class="t" style="left:589px;top:175px;height:14px;line-height:14px;font-size:11px;color:#000;letter-spacing:-0.117px;">300</div>
<div style="left:650px;top:174px;width:11px;height:15px;background:#ece9d8;"></div>
<div style="left:650px;top:174px;width:11px;height:7px;background:#ece9d8;border:1px solid #fff;border-right-color:#716f64;border-bottom-color:#716f64;"></div>
<div style="left:650px;top:181px;width:11px;height:8px;background:#ece9d8;border:1px solid #fff;border-right-color:#716f64;border-bottom-color:#716f64;"></div>
<svg style="left:0;top:0" width="1440" height="900"><polygon points="653,179 658,179 655.500,176" fill="#000"/><polygon points="653,183.500 658,183.500 655.500,186.500" fill="#000"/></svg>
<svg style="left:550px;top:191px;overflow:hidden" width="641" height="300" viewBox="0 0 641 300"><path d="M0.0 100.2 L15.0 105.1 L29.7 109.5 L44.1 113.4 L57.9 116.7 L71.0 119.1 L83.2 120.2 L94.3 119.9 L104.1 118.1 L112.7 115.3 L119.9 111.8 L125.6 107.6 L129.7 103.0 L132.4 98.1 L133.4 93.0 L132.9 88.4 L130.9 84.6 L127.5 82.0 L122.8 80.6 L116.9 80.3 L109.8 80.9 L101.9 82.7 L93.2 85.6 L83.8 89.7 L74.1 94.5 L64.2 99.6 L54.2 104.5 L44.4 108.9 L34.9 112.9 L26.0 116.3 L17.8 118.8 L10.6 120.1 L4.3 120.0 L-0.7 118.4 L-4.5 115.8 L-6.9 112.3 L-7.8 108.2 L-7.1 103.7 L-4.9 98.7 L-1.2 93.7 L4.1 89.0 L10.9 85.1 L19.1 82.3 L28.7 80.7 L39.4 80.3 L51.3 80.8 L64.2 82.4 L77.8 85.2 L92.1 89.1 L106.7 93.9 L121.7 98.9 L136.7 103.8 L151.5 108.4 L166.0 112.4 L180.0 115.9 L193.3 118.5 L205.7 120.0 L217.1 120.1 L227.3 118.7 L236.2 116.2 L243.8 112.8 L249.9 108.8 L254.5 104.3 L257.5 99.4 L258.9 94.3 L258.8 89.5 L257.3 85.5 L254.2 82.6 L249.8 80.9 L244.2 80.3 L237.5 80.6 L229.7 82.1 L221.2 84.7 L212.0 88.5 L202.4 93.2 L192.5 98.2 L182.5 103.2 L172.6 107.8 L163.0 111.9 L154.0 115.4 L145.6 118.2 L138.1 119.9 L131.5 120.2 L126.1 119.0 L122.0 116.6 L119.3 113.3 L118.0 109.3 L118.2 104.9 L120.0 100.1 L123.3 95.0 L128.2 90.1 L134.6 86.0 L142.5 82.9 L151.7 81.0 L162.1 80.3 L173.7 80.5 L186.3 81.8 L199.8 84.3 L213.9 88.0 L228.5 92.5 L243.4 97.6 L258.4 102.6 L273.3 107.2 L287.9 111.4 L302.0 115.0 L315.5 117.9 L328.2 119.8 L339.8 120.2 L350.4 119.2 L359.7 116.9 L367.6 113.7 L374.1 109.9 L379.1 105.5 L382.5 100.7 L384.4 95.7 L384.7 90.8 L383.5 86.5 L380.8 83.3 L376.8 81.2 L371.5 80.3 L365.0 80.4 L357.6 81.6 L349.2 83.9 L340.2 87.4 L330.6 91.9 L320.8 96.9 L310.8 101.9 L300.9 106.6 L291.2 110.9 L282.0 114.6 L273.4 117.6 L265.6 119.6 L258.8 120.2 L253.1 119.4 L248.7 117.3 L245.5 114.2 L243.9 110.4 L243.7 106.1 L245.0 101.4 L248.0 96.4 L252.4 91.4 L258.4 87.0 L265.9 83.6 L274.8 81.4 L284.9 80.4 L296.2 80.4 L308.6 81.4 L321.8 83.5 L335.8 86.9 L350.2 91.3 L365.1 96.2 L380.0 101.3 L395.0 106.0 L409.7 110.3 L424.0 114.1 L437.7 117.2 L450.6 119.4 L462.5 120.2 L473.4 119.6 L483.0 117.7 L491.3 114.7 L498.2 111.0 L503.6 106.7 L507.4 102.0 L509.7 97.0 L510.4 92.0 L509.6 87.5 L507.3 84.0 L503.7 81.7 L498.7 80.5 L492.5 80.3 L485.3 81.2 L477.2 83.2 L468.3 86.4 L458.9 90.6 L449.1 95.5 L439.1 100.6 L429.2 105.4 L419.4 109.8 L410.1 113.6 L401.3 116.9 L393.3 119.2 L386.2 120.2 L380.2 119.8 L375.4 118.0 L371.9 115.1 L369.8 111.5 L369.2 107.3 L370.2 102.7 L372.7 97.7 L376.8 92.7 L382.4 88.1 L389.4 84.4 L397.9 81.9 L407.8 80.6 L418.8 80.3 L430.9 81.0 L443.9 82.9 L457.7 85.9 L472.0 90.0 L486.8 94.9 L501.7 99.9 L516.7 104.8 L531.5 109.2 L545.9 113.2 L559.8 116.5 L572.9 118.9 L585.1 120.2 L596.3 119.9 L606.2 118.3 L614.9 115.5 L622.2 112.0 L627.9 107.9 L632.2 103.3 L634.9 98.4 L636.0 93.3 L635.6 88.6 L633.7 84.8 L630.4 82.2 L625.8 80.7 L619.9 80.3 L613.0 80.9 L605.1 82.5 L596.4 85.4 L587.1 89.4 L577.4 94.2 L567.4 99.3 L557.5 104.2 L547.6 108.7 L538.1 112.7 L529.2 116.1 L521.0 118.7 L513.6 120.1 L507.3 120.0 L502.2 118.6 L498.3 116.0 L495.9 112.5 L494.9 108.5 L495.5 104.0 L497.5 99.0 L501.2 94.0 L506.4 89.2 L513.1 85.3 L521.2 82.4 L530.7 80.8 L541.4 80.3 L553.2 80.7 L566.0 82.2 L579.6 85.0 L593.8 88.8 L608.5 93.5 L623.4 98.6 L638.4 103.5 L653.3 108.1 L667.8 112.2 L681.8 115.7 L695.1 118.4 L707.6 120.0 L719.1 120.1 L729.4 118.9 L738.4 116.4 L746.0 113.0 L752.2 109.0 L756.9 104.6 L760.0 99.7 L761.5 94.7 L761.6 89.8 L760.1 85.7 L757.1 82.7 L752.8 81.0 L747.3 80.3 L740.6 80.6 L732.9 82.0 L724.4 84.5 L715.3 88.3 L705.7 92.9 L695.7 97.9 L685.8 102.9 L675.9 107.5 L666.3 111.7 L657.2 115.2 L648.7 118.1 L641.2 119.8 L634.6 120.2 L629.1 119.1 L624.9 116.7 L622.1 113.5 L620.7 109.6 L620.8 105.2 L622.5 100.4 L625.7 95.3 L630.5 90.4 L636.8 86.2 L644.6 83.1 L653.7 81.1 L664.1 80.3 L675.6 80.5 L688.2 81.7 L701.6 84.1 L715.7 87.7 L730.2 92.2" fill="none" stroke="#000" stroke-width="1.100" stroke-linejoin="round"/></svg>
<div class="t" style="left:615px;top:678px;height:14px;line-height:14px;font-size:11px;color:#000;letter-spacing:-0.035px;">Use this tool to create your curve's formulae (hit ENTER to refresh), then paste to the plugin dialog fields.</div>
<div style="left:4px;top:850px;width:1435px;height:1px;background:#111;"></div>
<div style="left:0px;top:851px;width:1440px;height:8px;background:linear-gradient(#7a86e4 0,#7b8ae6 3px,#5c5cc8 3px,#5c5cc8 4px,#7b8ae6 4px,#7a88e4 7px,#3a3080 7px);"></div>
<div style="left:0px;top:855px;width:3px;height:5px;background:#000;"></div>
<div style="left:0px;top:860px;width:1440px;height:40px;background:#000;"></div>
<div style="left:31px;top:859px;width:1379px;height:41px;border-radius:11px 11px 0 0;overflow:hidden;background:linear-gradient(#8a0a0a 0,#a80000 1px,#a00000 2px,#3a0c1c 3px,#2c0a22 6px,#3a1030 9px,#5a0a18 10px,#a60000 11px,#a80000 100%);"><div style="left:0;top:6px;width:1379px;height:4px;background:linear-gradient(90deg,rgba(255,255,255,0) 0,rgba(230,170,190,.0) 8%,rgba(230,170,190,.45) 25%,rgba(230,170,190,.5) 38%,rgba(120,0,0,0) 48%,rgba(230,170,190,.35) 62%,rgba(230,170,190,.45) 72%,rgba(255,255,255,0) 90%);"></div><div style="left:0;top:2px;width:1379px;height:2px;background:linear-gradient(90deg,rgba(255,200,200,.0) 0,rgba(255,200,200,.55) 10%,rgba(255,200,200,.0) 40%,rgba(255,200,200,.0) 60%,rgba(255,200,200,.4) 80%,rgba(255,200,200,0) 95%);"></div><div style="left:10px;top:11px;width:1347px;height:24px;border-radius:5px 0 0 5px;background:linear-gradient(#a60000,#b00000 50%,#a80000);"></div><div style="left:10px;top:28px;width:1349px;height:1px;background:rgba(255,190,190,.55);"></div><div style="left:10px;top:35px;width:1359px;height:4px;background:linear-gradient(rgba(0,0,0,0),rgba(0,0,0,0)),linear-gradient(90deg,#c04040,#f8d8d8 25%,#f0a8a8 45%,#fff0f0 60%,#e89090 80%,#c85050);"></div><div style="left:0;top:39px;width:1379px;height:2px;background:#4a0008;"></div><div style="left:0;top:10px;width:10px;height:31px;background:#5a0000;"></div><div style="left:1px;top:4px;width:2px;height:36px;background:#d8b0b0;"></div><div style="left:4px;top:6px;width:5px;height:9px;background:#9a8888;transform:skewX(-20deg);"></div><div style="left:2px;top:20px;width:8px;height:1px;background:#c8a8a8;"></div><div style="left:2px;top:24px;width:10px;height:1px;background:#c8a8a8;"></div><div style="left:10px;top:30px;width:8px;height:2px;background:#ff2020;transform:rotate(35deg);"></div><div style="left:1359px;top:0;width:20px;height:41px;background:#3a0000;"></div><svg style="left:1357px;top:0" width="22" height="41" viewBox="0 0 22 41"><path d="M3 2c6-2 14 0 17 5v34" fill="none" stroke="#f4e4e4" stroke-width="1.300"/><path d="M4 6c3 2 2 6 5 8s-2 6 1 9-3 6 0 9 0 6 2 9" fill="none" stroke="#ffd8d8" stroke-width="1.300"/><path d="M9 3c5 2 6 6 5 10s-4 6-2 10 5 5 3 9-3 5-1 9" fill="none" stroke="#e8c8c8" stroke-width="1.200"/><path d="M5 14c3-3 6 0 4 4s2 5 5 3" fill="none" stroke="#ff4040" stroke-width="1.600"/><path d="M3 24l6 5M12 20l5 4M6 34l8-4" stroke="#c81010" stroke-width="1.500"/></svg></div>
<svg style="left:46.5px;top:875px" width="19" height="19" viewBox="0 0 18 18"><rect x="1" y="1" width="16" height="16" rx="2" fill="#d81820"/><circle cx="9" cy="9.500" r="5.500" fill="none" stroke="#f8d8d8" stroke-width="1.300"/><rect x="8.300" y="6" width="1.400" height="7" fill="#f8d8d8"/></svg>
<svg style="left:65.5px;top:875px" width="19" height="19" viewBox="0 0 18 18"><path d="M1 3h5l3 4 3-4h5l-6 6 6 6h-5l-3-4-3 4H1l6-6z" fill="#05070c"/><path d="M13 15h4l-1.500-1.500z" fill="#8aa0d0"/></svg>
<svg style="left:84.5px;top:875px" width="19" height="19" viewBox="0 0 18 18"><rect x="6" y="1" width="10" height="9" fill="#c8ccd0"/><rect x="7.500" y="2.500" width="7" height="5.500" fill="#2a7ae0"/><rect x="5" y="11" width="12" height="4" fill="#b8bcc0"/><rect x="1" y="7" width="6" height="10" rx="1.500" fill="#f0f0f0"/><rect x="1" y="10" width="6" height="3" fill="#1a3fc0"/></svg>
<svg style="left:102.5px;top:875px" width="19" height="19" viewBox="0 0 18 18"><circle cx="9" cy="9" r="8" fill="#9ac8d8"/><ellipse cx="9" cy="4.500" rx="5" ry="2" fill="#f4f4f4"/><path d="M9 16l-3.500-4h2V8h3v4h2z" fill="#1a6ae0"/><path d="M2 9a7 7 0 0 1 3-5" stroke="#a8d8a0" stroke-width="2" fill="none"/></svg>
<svg style="left:121.5px;top:875px" width="19" height="19" viewBox="0 0 18 18"><path d="M1 1v16l8-8z" fill="#18e018"/><circle cx="14" cy="13" r="4" fill="#18d818"/></svg>
<svg style="left:140.5px;top:875px" width="19" height="19" viewBox="0 0 18 18"><path d="M1 11l10-8 6 3-10 9z" fill="#f4f4f4"/><path d="M11 3l6 3-2 2-6-3z" fill="#d83030"/><path d="M1 11l2-1.500 6 4-2 1.500z" fill="#5a9ae8"/><path d="M9 17c1-3 4-3 5 0" stroke="#3a8ae8" stroke-width="2" fill="none"/></svg>
<svg style="left:159.5px;top:875px" width="19" height="19" viewBox="0 0 18 18"><circle cx="9" cy="9" r="8" fill="#e8781a"/><circle cx="9.500" cy="8" r="4.500" fill="#2a5ac8"/><path d="M2 6c2 6 8 8 13 4-2 6-10 7-13 2z" fill="#f0a020"/><path d="M2 4l3 3-3 2z" fill="#e85a10"/></svg>
<svg style="left:179.5px;top:875px" width="19" height="19" viewBox="0 0 18 18"><rect x="2" y="1" width="14" height="14" fill="#d8c080" transform="rotate(-4 9 9)"/><text x="9" y="8" font-family="Liberation Sans" font-size="9" font-weight="bold" fill="#222" text-anchor="middle">@</text><text x="9" y="14" font-family="Liberation Sans" font-size="6" font-weight="bold" fill="#333" text-anchor="middle">FTP</text><rect x="4" y="16" width="7" height="1.500" fill="#20c020"/></svg>
<svg style="left:197.5px;top:875px" width="19" height="19" viewBox="0 0 18 18"><rect x="1" y="8" width="8" height="8" fill="#2a7ae8" transform="rotate(-15 5 12)"/><rect x="8" y="7" width="9" height="9" fill="#f020e8" transform="rotate(10 12 12)"/><path d="M9 0l3.500 4h-2.500v4h-2V4H5.500z" fill="#fff"/></svg>
<svg style="left:216.5px;top:875px" width="19" height="19" viewBox="0 0 18 18"><rect x="1" y="1" width="16" height="16" rx="2" fill="#0c0c0c"/><path d="M3 4l14 6v7z" fill="#aaa" opacity=".7"/><path d="M4 4l13 9M4 5l11 12" stroke="#eee" stroke-width=".8"/><circle cx="4" cy="4" r="1.500" fill="#fff"/></svg>
<svg style="left:235.5px;top:875px" width="19" height="19" viewBox="0 0 18 18"><path d="M2 12c0-5 5-8 10-7l4-2 1 2-3 2c1 3 0 5-1 7l2 2h-4l-1-2-3 1-2 2H2l2-3z" fill="#e89018"/><circle cx="13" cy="5" r="1" fill="#222"/></svg>
<svg style="left:254.5px;top:875px" width="19" height="19" viewBox="0 0 18 18"><rect x="1" y="1" width="16" height="16" rx="1" fill="#8a0c0c"/><path d="M3 14c4-2 6-6 6-11 0 6 3 9 6 10-4-1-8-1-12 1z" fill="none" stroke="#f4f4f4" stroke-width="1.200"/></svg>
<svg style="left:273.5px;top:875px" width="19" height="19" viewBox="0 0 18 18"><circle cx="5" cy="6" r="4" fill="#f0e020"/><circle cx="13" cy="6" r="4" fill="#e82020"/><circle cx="9" cy="13" r="4" fill="#30d830"/></svg>
<svg style="left:292.5px;top:875px" width="19" height="19" viewBox="0 0 18 18"><circle cx="9" cy="9" r="8" fill="#a8a8b0"/><circle cx="9" cy="9" r="5.500" fill="#f0d020"/><path d="M9 9V3.500A5.500 5.500 0 0 1 14.500 9z" fill="#e84080"/><path d="M9 9h5.500A5.500 5.500 0 0 1 9 14.500z" fill="#40a0e8"/><path d="M9 9v5.500A5.500 5.500 0 0 1 3.500 9z" fill="#40d060"/></svg>
<svg style="left:311.5px;top:875px" width="19" height="19" viewBox="0 0 18 18"><path d="M3 16l1-4 6-6 3 3-6 6z" fill="#2a7ae8"/><path d="M9 4l3-3 4 4-3 3z" fill="#111"/><path d="M8 6l4 4" stroke="#111" stroke-width="2"/></svg>
<svg style="left:331.5px;top:875px" width="19" height="19" viewBox="0 0 18 18"><rect x="1" y="4" width="16" height="11" fill="#f4f4f4"/><rect x="1" y="4" width="16" height="3" fill="#c8c8c8"/><path d="M1 9.500h16M1 12h16M5 7v8M9 7v8M13 7v8" stroke="#777" stroke-width=".8"/></svg>
<svg style="left:350.5px;top:875px" width="19" height="19" viewBox="0 0 18 18"><path d="M15 5A7 7 0 1 0 15 13l-3-2a3.500 3.500 0 1 1 0-4z" fill="#e82a18"/><path d="M8 12l6-9 2 1.500-5 9z" fill="#3a7ae0"/><path d="M6 14l3-3 3 2-3 4z" fill="#e8c040"/></svg>
<svg style="left:369.5px;top:875px" width="19" height="19" viewBox="0 0 18 18"><path d="M2 6l7-4 7 4v8l-7 3-7-3z" fill="#c8a060"/><path d="M2 6l7 3 7-3" stroke="#8a6830" fill="none"/><path d="M9 9v8" stroke="#8a6830"/><path d="M12 14h5M14.500 11.500v5" stroke="#20c020" stroke-width="2"/></svg>
<svg style="left:387.5px;top:875px" width="19" height="19" viewBox="0 0 18 18"><path d="M2 3l3-2 10 11-3 2z" fill="#e82828"/><path d="M12 14l3-2 2 5z" fill="#e8c080"/><path d="M2 3l3-2 1.500 1.500-3 2z" fill="#f0a0a0"/></svg>
<svg style="left:407.5px;top:875px" width="19" height="19" viewBox="0 0 18 18"><rect x="3" y="1" width="13" height="16" fill="#3a78d8"/><rect x="2" y="1" width="2.500" height="16" fill="#1a3a8a"/><text x="10" y="14" font-family="Liberation Sans" font-size="13" font-weight="bold" fill="#e8f0ff" text-anchor="middle">?</text></svg>
<svg style="left:425.5px;top:875px" width="19" height="19" viewBox="0 0 18 18"><path d="M6 4h6M9 1v6" stroke="#20d020" stroke-width="2.500"/><text x="8" y="17" font-family="Liberation Sans" font-size="11" font-weight="bold" fill="#9a9a9a" text-anchor="middle">G</text><path d="M13 10v7M11 13.500h5" stroke="#e82020" stroke-width="1.500"/></svg>
<svg style="left:444.5px;top:875px" width="19" height="19" viewBox="0 0 18 18"><path d="M1 3h16l-1 10H2z" fill="#2a78e0"/><path d="M3 14h12v2H3z" fill="#1a4aa8"/><path d="M9 13l5 3" stroke="#d8d8f0" stroke-width="1.500"/></svg>
<svg style="left:462.5px;top:875px" width="19" height="19" viewBox="0 0 18 18"><rect x="2" y="2" width="12" height="14" fill="#f0f0e8"/><rect x="3" y="8" width="10" height="7" fill="#50b838"/><circle cx="7" cy="7" r="2" fill="#d8e8f8"/><path d="M16 1L9 13" stroke="#e88820" stroke-width="1.500"/></svg>
<svg style="left:481.5px;top:875px" width="19" height="19" viewBox="0 0 18 18"><rect x="1" y="3" width="16" height="12" fill="#e8d8a0" transform="rotate(-6 9 9)"/><rect x="3" y="4" width="13" height="9" fill="#58a8e8"/><path d="M3 13l4-5 3 3 3-4 3 6z" fill="#48a038"/></svg>
<svg style="left:501.5px;top:875px" width="19" height="19" viewBox="0 0 18 18"><rect x="1" y="1" width="16" height="16" rx="1" fill="#f4f4f4"/><path d="M9 15L3 8a8 8 0 0 1 6-4z" fill="#28a838"/><path d="M9 15l6-7a8 8 0 0 0-6-4z" fill="#e83818"/><path d="M9 15L5 5M9 15l4-10" stroke="#fff" stroke-width=".8"/></svg>
<svg style="left:521.5px;top:875px" width="19" height="19" viewBox="0 0 18 18"><rect x="1" y="1" width="16" height="16" rx="0" fill="#fff"/><circle cx="9" cy="9" r="7" fill="#f07818"/><path d="M7 14c4-2 0-5 3-10-4 3-5 7-3 10z" fill="#fff"/><path d="M11 13c2-2 1-4 1-6" stroke="#fff" stroke-width="1.200" fill="none"/></svg>
<svg style="left:540.5px;top:875px" width="19" height="19" viewBox="0 0 18 18"><rect x="2" y="2" width="14" height="15" fill="#111"/><rect x="5" y="4" width="8" height="5" fill="#e84040"/><rect x="5" y="10" width="8" height="6" fill="#4890e8"/><path d="M3.500 2v15M14.500 2v15" stroke="#ddd" stroke-width="1" stroke-dasharray="1.500 1.500"/><circle cx="4" cy="2" r="2" fill="#c01818"/></svg>
<svg style="left:560.5px;top:875px" width="19" height="19" viewBox="0 0 18 18"><circle cx="9" cy="9" r="7.5" fill="#888"/><circle cx="9" cy="5" r="2" fill="#222"/><circle cx="5" cy="10" r="2" fill="#222"/><circle cx="13" cy="10" r="2" fill="#222"/><circle cx="9" cy="13.500" r="1.800" fill="#f4f4f4"/><path d="M2 4l4 3" stroke="#3a8ae8" stroke-width="2.500"/></svg>
<svg style="left:578.5px;top:875px" width="19" height="19" viewBox="0 0 18 18"><rect x="1" y="1" width="16" height="16" rx="0" fill="#f4f4f4"/><circle cx="9" cy="9" r="6.500" fill="#2a78d0"/><path d="M4 10h10M5 7a4.500 4.500 0 0 1 8 0" stroke="#fff" stroke-width="1.500" fill="none"/><path d="M3 14L15 5" stroke="#e8e8f8" stroke-width="1.200"/></svg>
<svg style="left:596.5px;top:875px" width="19" height="19" viewBox="0 0 18 18"><circle cx="9" cy="8" r="6.500" fill="#f0c020"/><rect x="3" y="6" width="12" height="3.500" rx="1.500" fill="#111"/><path d="M3 17c1-4 11-4 12 0z" fill="#c02020"/><path d="M6 11.500c2 1.500 4 1.500 6 0" stroke="#803000" fill="none"/></svg>
<svg style="left:615.5px;top:875px" width="19" height="19" viewBox="0 0 18 18"><path d="M9 0l9 9-9 9-9-9z" fill="#28c838"/><circle cx="9" cy="7" r="3.500" fill="#f0a040"/><path d="M5 16c0-5 8-5 8 0z" fill="#3a8ae8"/><path d="M5 6c1-4 7-4 8 0z" fill="#e87818"/></svg>
<svg style="left:634.5px;top:875px" width="19" height="19" viewBox="0 0 18 18"><rect x="1" y="1" width="16" height="16" rx="0" fill="#3a70c8"/><path d="M1 12l3-5 2 3 3-6 3 5 2-3 3 6v5H1z" fill="#8a98b8"/><rect x="1" y="13" width="16" height="4" fill="#2a3a68"/><rect x="3" y="3" width="12" height="2" fill="#a8c8f0"/></svg>
<svg style="left:654.5px;top:875px" width="19" height="19" viewBox="0 0 18 18"><rect x="5" y="5" width="8" height="12" rx="1" fill="#2a78e8"/><rect x="6.500" y="1" width="5" height="4" fill="#e8e8e8"/><rect x="7" y="8" width="4" height="5" fill="#a8d0f8"/></svg>
<svg style="left:672.5px;top:875px" width="19" height="19" viewBox="0 0 18 18"><rect x="3" y="4" width="11" height="13" rx="2" fill="#f0e8d0"/><rect x="5" y="1" width="9" height="4" rx="1" fill="#f8f4e8"/><rect x="5" y="8" width="6" height="5" fill="#e84828"/><path d="M6 9h4" stroke="#2a58c8"/></svg>
<svg style="left:691.5px;top:875px" width="19" height="19" viewBox="0 0 18 18"><path d="M1 3h6l2 2h8v12H1z" fill="#f8e080"/><path d="M1 6h16v11H1z" fill="#f4d868"/></svg>
<svg style="left:710.5px;top:875px" width="19" height="19" viewBox="0 0 18 18"><rect x="1" y="1" width="16" height="16" rx="3" fill="#d8e8f8"/><rect x="3" y="3" width="12" height="12" fill="none" stroke="#2a68c8" stroke-width="1.500"/><path d="M3 9h12M9 3v12" stroke="#2a68c8"/><rect x="5" y="5" width="3" height="3" fill="#fff"/></svg>
<svg style="left:729.5px;top:875px" width="19" height="19" viewBox="0 0 18 18"><path d="M6 1l3 4 4-3-2 5c2 3 0 6-2 10H7c-1-3-3-6-2-9z" fill="#d8d0c8"/><path d="M7 8l3 1-2 6z" fill="#38a8a0"/><path d="M3 14l12-6" stroke="#e84040" stroke-width="1.200"/><path d="M6 1l3 4-3 1z" fill="#a86838"/></svg>
<svg style="left:748.0px;top:875px" width="19" height="19" viewBox="0 0 18 18"><path d="M1 6c3-2 6-1 8 1 2-2 5-3 8-1v9c-3-2-6-1-8 1-2-2-5-3-8-1z" fill="#e8e0b0" stroke="#787038" stroke-width=".8"/><path d="M9 7v9" stroke="#787038"/><path d="M10 12L17 2" stroke="#2a48c8" stroke-width="2"/><path d="M3 8h4M3 10h4M3 12h4" stroke="#8a8458" stroke-width=".7"/></svg>
<svg style="left:768.0px;top:875px" width="19" height="19" viewBox="0 0 18 18"><rect x="1" y="1" width="16" height="16" rx="3" fill="#f08838"/><path d="M4 5c3-2 7-2 10 0-1 5-3 8-5 10-2-2-4-5-5-10z" fill="#fff4e8"/><text x="9" y="10.5" font-family="Liberation Sans" font-size="6" font-weight="bold" fill="#f08838" text-anchor="middle">TP</text></svg>
<svg style="left:786.5px;top:875px" width="19" height="19" viewBox="0 0 18 18"><rect x="2" y="4" width="11" height="12" fill="#4a88e0"/><rect x="8" y="1" width="8" height="8" fill="#88b8f0"/><rect x="4" y="6" width="4" height="4" fill="#d8e8f8"/><rect x="10" y="11" width="5" height="5" fill="#a8c8f0"/><rect x="11" y="3" width="3" height="3" fill="#f0f4f8"/></svg>
<svg style="left:805.5px;top:875px" width="19" height="19" viewBox="0 0 18 18"><rect x="-1" y="-1" width="20" height="20" fill="#d8b098"/><ellipse cx="9" cy="10" rx="7" ry="4" fill="#f0e8e0"/><circle cx="9" cy="10" r="3.500" fill="#687870"/><circle cx="9" cy="10" r="1.500" fill="#111"/><path d="M1 9c4-5 12-5 16 0" stroke="#403028" stroke-width="1.500" fill="none"/><path d="M0 4c5-3 13-3 18 0" stroke="#705040" stroke-width="1.500" fill="none"/></svg>
<svg style="left:825.0px;top:875px" width="19" height="19" viewBox="0 0 18 18"><rect x="1" y="1" width="16" height="16" rx="0" fill="#f0c818"/><path d="M1 5l3-4 2 3 3-4 3 4 2-3 3 4v3H1z" fill="#f07818"/><text x="9" y="15" font-family="Liberation Sans" font-size="11" font-weight="bold" fill="#111" text-anchor="middle">FT</text></svg>
<svg style="left:844.5px;top:875px" width="19" height="19" viewBox="0 0 18 18"><rect x="2" y="2" width="13" height="10" fill="#7898b8"/><rect x="3.500" y="3.500" width="10" height="7" fill="#a8c0d8"/><rect x="7" y="12" width="3" height="3" fill="#889"/><rect x="4" y="15" width="9" height="2" fill="#99a"/><path d="M16 1L8 9" stroke="#e8a040" stroke-width="1.500"/></svg>
<svg style="left:863.0px;top:875px" width="19" height="19" viewBox="0 0 18 18"><rect x="1" y="1" width="16" height="16" rx="0" fill="#f8f8f8"/><text x="6.5" y="14" font-family="Liberation Sans" font-size="12" font-weight="bold" fill="#d82020" text-anchor="middle">A</text><text x="13.5" y="14" font-family="Liberation Sans" font-size="10" font-weight="bold" fill="#2a48b8" text-anchor="middle">a</text></svg>
<svg style="left:881.5px;top:875px" width="19" height="19" viewBox="0 0 18 18"><circle cx="9" cy="9" r="8" fill="#222"/><path d="M9 9L9 1A8 8 0 0 1 16 5z" fill="#e82020"/><path d="M9 9L16 5A8 8 0 0 1 16 13z" fill="#f0d020"/><path d="M9 9L16 13A8 8 0 0 1 9 17z" fill="#30b030"/><path d="M9 9L9 17A8 8 0 0 1 2 13z" fill="#2a58d8"/><path d="M9 9L2 13A8 8 0 0 1 2 5z" fill="#8030c0"/><circle cx="9" cy="9" r="2.500" fill="#fff"/></svg>
<svg style="left:901.0px;top:875px" width="19" height="19" viewBox="0 0 18 18"><path d="M9 1l8 8-3 1 2 3H2l2-3-3-1z" fill="#0c0c0c"/><path d="M5 14h8l1 3H4z" fill="#333"/><path d="M9 3l3 3H6z" fill="#888"/></svg>
<svg style="left:920.0px;top:875px" width="19" height="19" viewBox="0 0 18 18"><rect x="1" y="1" width="16" height="16" rx="2" fill="#a8a8a8"/><circle cx="7" cy="7" r="3" fill="#f0f0f0"/><path d="M3 15l5-5 3 3 2-2 3 4z" fill="#e0e0e0"/><circle cx="13" cy="6" r="1.500" fill="#f4f4f4"/></svg>
<svg style="left:939.5px;top:875px" width="19" height="19" viewBox="0 0 18 18"><path d="M1 16C2 6 8 1 12 2c3 3 5 9 5 14z" fill="#f08020"/><path d="M12 5c-4-1-6 2-3 4s3 4-2 5" stroke="#fff" stroke-width="1.800" fill="none"/><path d="M1 16h16" stroke="#f8f8f8" stroke-width="1.500"/></svg>
<svg style="left:958.0px;top:875px" width="19" height="19" viewBox="0 0 18 18"><path d="M2 2h5v5h4V2h5v5h-3v4h3v5h-5v-5H7v5H2v-5h3V7H2z" fill="none" stroke="#d8d8d8" stroke-width="1.500"/></svg>
<svg style="left:976.5px;top:875px" width="19" height="19" viewBox="0 0 18 18"><circle cx="9" cy="8" r="6" fill="#b81818"/><path d="M9 2v12M3 8h12M5 4l8 8M13 4l-8 8" stroke="#7a0c0c" stroke-width="1"/><rect x="2" y="12" width="4" height="4" fill="#111"/><rect x="6" y="14" width="4" height="3" fill="#eee"/></svg>
<svg style="left:995.5px;top:875px" width="19" height="19" viewBox="0 0 18 18"><path d="M1 14c4 2 8-2 10-6s4-6 6-5" stroke="#e83030" stroke-width="1.200" fill="none"/><path d="M3 16c6-1 8-6 8-10" stroke="#f06060" stroke-width="1" fill="none"/></svg>
<svg style="left:1014.5px;top:875px" width="19" height="19" viewBox="0 0 18 18"><rect x="1" y="1" width="16" height="16" rx="2" fill="#1c1c1c"/><text x="9" y="14" font-family="Liberation Sans" font-size="15" font-weight="bold" fill="#f4f4f4" text-anchor="middle">§</text></svg>
<svg style="left:1033.0px;top:875px" width="19" height="19" viewBox="0 0 18 18"><rect x="2" y="1" width="14" height="16" fill="#58a8e8" transform="rotate(8 9 9)"/><path d="M7 16c0-5 1-8 3-10l2 2c-1 2-1 5 0 8z" fill="#e8c8a0"/><circle cx="10" cy="5" r="2" fill="#402818"/><rect x="2" y="13" width="14" height="4" fill="#d8c898" transform="rotate(8 9 9)"/></svg>
<svg style="left:1051.5px;top:875px" width="19" height="19" viewBox="0 0 18 18"><circle cx="9" cy="9" r="8" fill="#0c0c0c"/><path d="M4 12c0-6 6-9 10-6-3 0-5 2-4 4s4 1 3 4-6 2-6-1" stroke="#e8b020" stroke-width="1.500" fill="none"/></svg>
<svg style="left:1071.5px;top:875px" width="19" height="19" viewBox="0 0 18 18"><rect x="1" y="1" width="16" height="16" rx="0" fill="#080808"/><circle cx="6" cy="6" r="3.500" fill="none" stroke="#f020e0" stroke-width="1.500"/><circle cx="12" cy="6" r="3.500" fill="none" stroke="#e8e020" stroke-width="1.500"/><circle cx="6" cy="12" r="3.500" fill="none" stroke="#e8e020" stroke-width="1.500"/><circle cx="12" cy="12" r="3.500" fill="none" stroke="#f020e0" stroke-width="1.500"/></svg>
<svg style="left:1090.5px;top:875px" width="19" height="19" viewBox="0 0 18 18"><rect x="1" y="1" width="16" height="16" rx="0" fill="#080808"/><path d="M3 3l12 12M15 3L3 15" stroke="#20d840" stroke-width="2"/><rect x="4" y="4" width="10" height="10" fill="none" stroke="#20d840" stroke-width="1.500"/><circle cx="9" cy="9" r="6" fill="none" stroke="#18a830" stroke-width="1.200"/></svg>
<svg style="left:1110.0px;top:875px" width="19" height="19" viewBox="0 0 18 18"><circle cx="9" cy="9" r="8" fill="#1a4890"/><circle cx="9" cy="9" r="5" fill="#5a98d8"/><path d="M4 10c3-4 7-4 10-1l-2 3H6z" fill="#707880"/><circle cx="7" cy="6" r="1.500" fill="#c8e0f8"/></svg>
<svg style="left:1129.5px;top:875px" width="19" height="19" viewBox="0 0 18 18"><path d="M2 5h12c0 7-2 10-6 10S2 12 2 5z" fill="#3a78d0"/><ellipse cx="8" cy="5" rx="6" ry="2" fill="#70401c"/><path d="M14 7c3 0 3 4-1 5" stroke="#3a78d0" stroke-width="1.500" fill="none"/><text x="8" y="13" font-family="Liberation Sans" font-size="7" font-weight="bold" fill="#d8e8f8" text-anchor="middle">J</text></svg>
<svg style="left:1148.0px;top:875px" width="19" height="19" viewBox="0 0 18 18"><rect x="1" y="1" width="16" height="16" fill="#f4f4f4"/><rect x="1" y="1" width="16" height="3.500" fill="#28b838"/><rect x="5" y="7" width="11" height="9" fill="#8a7860"/><path d="M5 16l5-6 3 3 3-4v7z" fill="#b8a888"/></svg>
<svg style="left:1166.5px;top:875px" width="19" height="19" viewBox="0 0 18 18"><path d="M1 6l8-4 8 4-8 4z" fill="#f0b030"/><path d="M1 9l8 4 8-4M1 12l8 4 8-4" stroke="#e89818" stroke-width="1.500" fill="none"/><text x="12" y="17" font-family="Liberation Sans" font-size="12" font-weight="bold" fill="#f8e8c0" text-anchor="middle">4</text></svg>
<svg style="left:1185.5px;top:875px" width="19" height="19" viewBox="0 0 18 18"><rect x="1" y="1" width="16" height="16" rx="1" fill="#c0c0c0"/><text x="9" y="7.5" font-family="Liberation Sans" font-size="7" font-weight="bold" fill="#f4f4f4" text-anchor="middle">WB</text><text x="9" y="16.5" font-family="Liberation Sans" font-size="11" font-weight="bold" fill="#2a78e8" text-anchor="middle">8</text></svg>
<svg style="left:1204.5px;top:875px" width="19" height="19" viewBox="0 0 18 18"><circle cx="9" cy="9" r="8" fill="#1a68d8"/><path d="M7 4v8h6" stroke="#f4f4f4" stroke-width="2.200" fill="none"/><path d="M2 9a7 7 0 0 1 7-7" stroke="#78b0f0" stroke-width="1.500" fill="none"/></svg>
<svg style="left:1223.5px;top:875px" width="19" height="19" viewBox="0 0 18 18"><rect x="1" y="1" width="16" height="16" rx="1" fill="#78b8e8"/><path d="M2 16C3 7 6 4 9 4s6 3 7 12z" fill="#d8ecf8"/><path d="M5 16c1-5 2-7 4-7s3 2 4 7z" fill="#78b8e8"/><path d="M1 15h16" stroke="#f4f4f4" stroke-width="1.500"/></svg>
<svg style="left:1242.5px;top:875px" width="19" height="19" viewBox="0 0 18 18"><path d="M1 8h9l-3-4 2-1 8 7c-1 5-8 7-11 3l-1-2h3z" fill="#f08018"/><circle cx="11" cy="10" r="3.500" fill="#f4f4f4"/><circle cx="11" cy="10" r="2" fill="#2a58c8"/></svg>
<svg style="left:1261.5px;top:875px" width="19" height="19" viewBox="0 0 18 18"><path d="M9 1l7 4v8l-7 4-7-4V5z" fill="#1a4890" stroke="#58a0e8" stroke-width="1"/><path d="M2 5l7 4 7-4M9 9v8M5.500 3l7 4M12.500 3l-7 4" stroke="#58a0e8" stroke-width=".8" fill="none"/><circle cx="9" cy="9" r="1.500" fill="#a8d0f8"/></svg>
<svg style="left:1281.5px;top:875px" width="19" height="19" viewBox="0 0 18 18"><rect x="1" y="3" width="13" height="12" fill="#d82838" transform="rotate(-10 8 9)"/><path d="M16 1L8 13" stroke="#3a88e0" stroke-width="2.500"/><path d="M8 13l-2 4 3-2z" fill="#222"/><path d="M4 6l6-1" stroke="#f0a0a8" stroke-width="1.500"/></svg>
<svg style="left:1300.0px;top:875px" width="19" height="19" viewBox="0 0 18 18"><path d="M1 14l4-9 4 6 4-8 4 11z" fill="#38a8b8"/><path d="M5 5l4 6 4-8 2 5-6 8z" fill="#888" opacity=".7"/><path d="M1 14l4-4 4 5 4-5 4 4v2H1z" fill="#2a7888"/></svg>
<svg style="left:1318.5px;top:875px" width="19" height="19" viewBox="0 0 18 18"><text x="8" y="13" font-family="Liberation Sans" font-size="12" font-weight="bold" fill="#2a78e0" text-anchor="middle">3D</text><path d="M12 10l3 7" stroke="#e8c020" stroke-width="1.500"/><circle cx="12" cy="9" r="1.500" fill="#f0e040"/></svg>
<svg style="left:1337.5px;top:875px" width="19" height="19" viewBox="0 0 18 18"><text x="9" y="13" font-family="Liberation Sans" font-size="12" font-weight="bold" fill="#2a68e0" text-anchor="middle">3D</text><path d="M1 15h16" stroke="#1a3a98" stroke-width="1"/></svg>
<svg style="left:1358.0px;top:875px" width="19" height="19" viewBox="0 0 18 18"><rect x="2" y="2" width="14" height="14" fill="#f0c820"/><rect x="2" y="2" width="14" height="3" fill="#222"/><rect x="3" y="6" width="6" height="4" fill="#e82020"/><circle cx="11" cy="13" r="4.500" fill="#f4f4f4"/><circle cx="11" cy="13" r="1.200" fill="#888"/><path d="M8 14l3 2" stroke="#28b838" stroke-width="1.500"/></svg>
<svg style="left:1377.5px;top:875px" width="19" height="19" viewBox="0 0 18 18"><ellipse cx="9" cy="12" rx="8" ry="4.500" fill="#484038"/><ellipse cx="9" cy="11" rx="5" ry="2.500" fill="#a89878"/><path d="M5 10V5h8v5" fill="#302820"/><ellipse cx="9" cy="5" rx="4" ry="1.500" fill="#585048"/></svg>
</body></html>
